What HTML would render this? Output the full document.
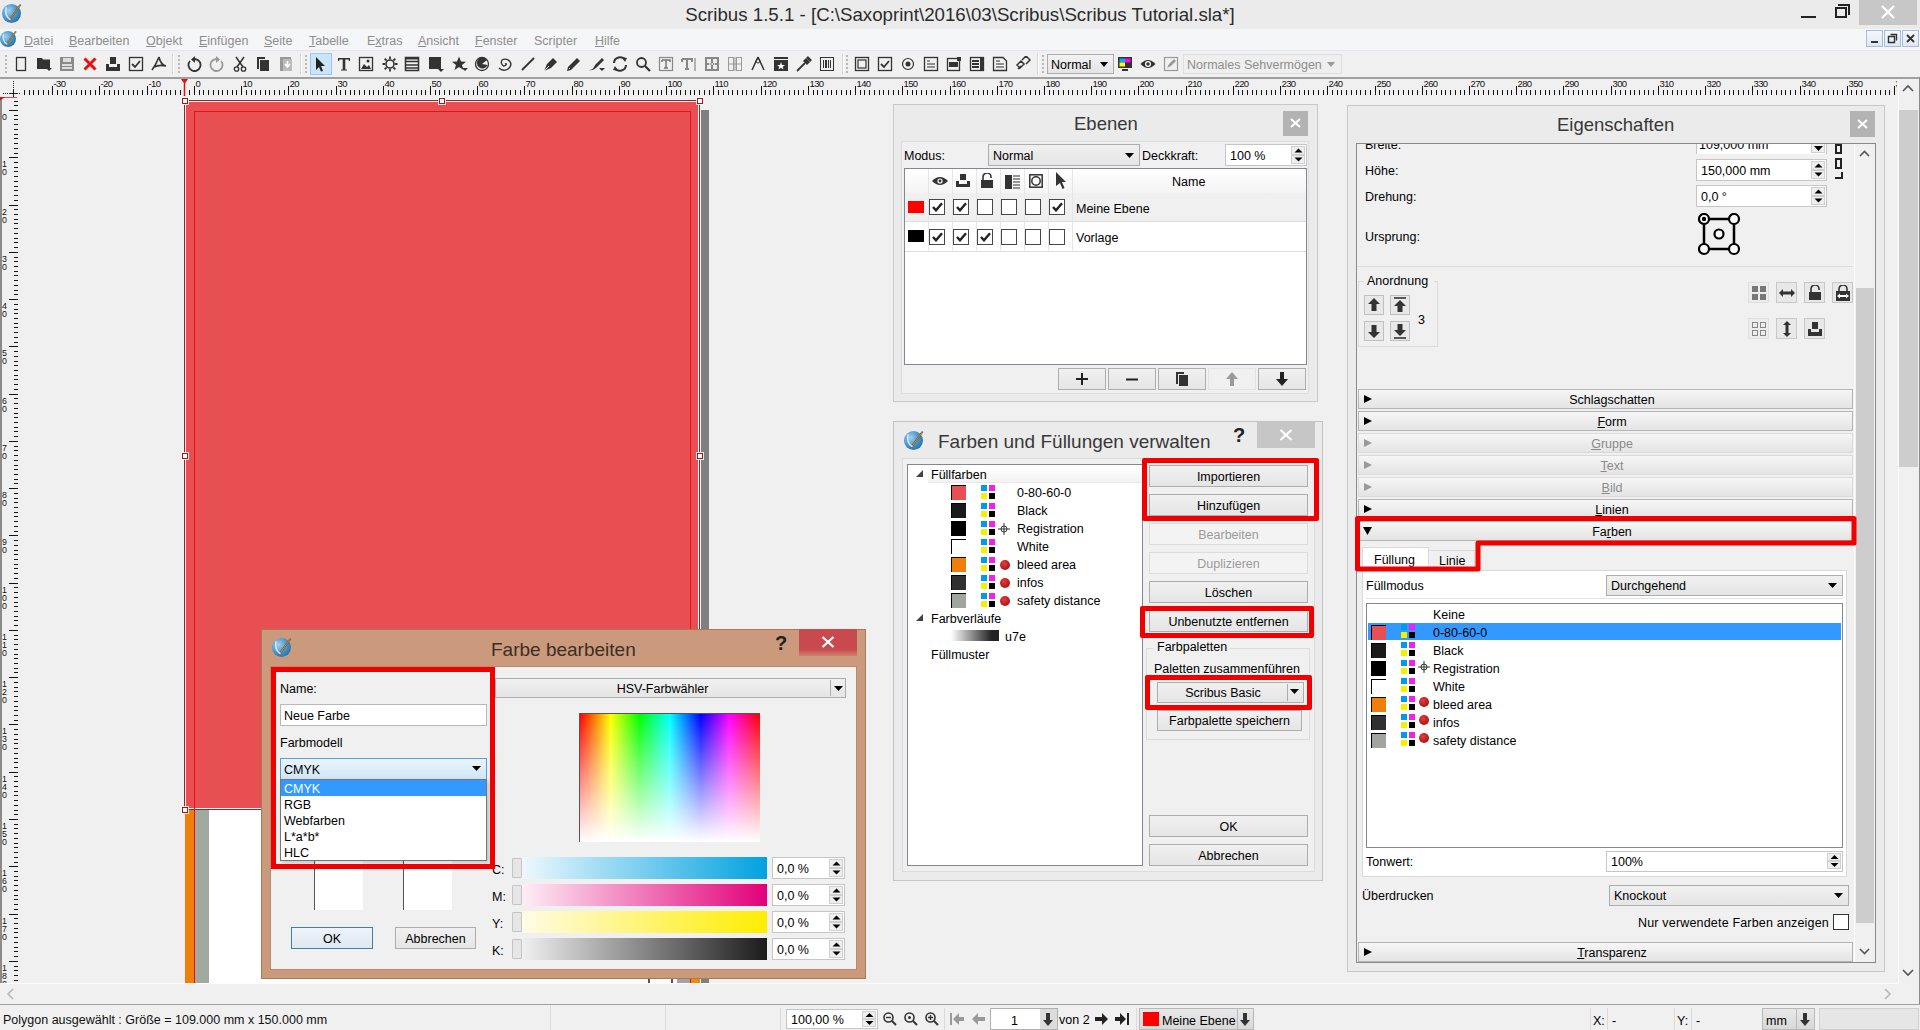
<!DOCTYPE html>
<html><head><meta charset="utf-8">
<style>
*{box-sizing:border-box;margin:0;padding:0}
html,body{width:1920px;height:1030px;overflow:hidden;background:#f0f0f0;font-family:"Liberation Sans",sans-serif;font-size:12.5px;color:#000}
.a{position:absolute}
.t{position:absolute;white-space:nowrap;line-height:1;padding-top:1px}
.btn{position:absolute;background:linear-gradient(#f2f2f2,#e6e6e6);border:1px solid #acacac}
.ctr{text-align:center}
u{text-decoration:underline}
</style></head><body>

<!-- TITLE BAR -->
<div class="a" style="left:0;top:0;width:1920px;height:29px;background:#ebebeb"></div>
<div class="t" style="left:0;top:5px;width:1920px;text-align:center;font-size:18.7px;color:#2b2b2b;padding-left:0">Scribus 1.5.1 - [C:\Saxoprint\2016\03\Scribus\Scribus Tutorial.sla*]</div>
<div class="a" style="left:1801px;top:16px;width:15px;height:2px;background:#222"></div>
<div class="a" style="left:1835px;top:7px;width:12px;height:11px;border:2px solid #222;border-top-width:2px"></div>
<div class="a" style="left:1838px;top:4px;width:12px;height:11px;border-top:2px solid #222;border-right:2px solid #222"></div>
<div class="a" style="left:1859px;top:0;width:58px;height:25px;background:#c7c7c7"></div>
<svg class="a" style="left:1880px;top:5px" width="16" height="14"><path d="M2 1 L14 13 M14 1 L2 13" stroke="#fff" stroke-width="2.2"/></svg>

<!-- MENU BAR -->
<div class="a" style="left:0;top:29px;width:1920px;height:22px;background:#f5f6f7;border-bottom:1px solid #e3e6ea"></div>
<div id="menu"></div>

<!-- TOOLBAR -->
<div class="a" style="left:0;top:51px;width:1920px;height:26px;background:#f0f0f0"></div>

<!-- RULERS -->
<div class="a" style="left:0;top:77px;width:1920px;height:2px;background:#a0a0a0"></div>

<!-- CANVAS -->
<div class="a" style="left:0;top:79px;width:1898px;height:906px;background:#f0f0f0"></div>

<!-- PAGE 1 -->
<div class="a" style="left:184px;top:100px;width:516px;height:710px;border:1px solid #a51d22;background:#fff"></div>
<div class="a" style="left:186px;top:102px;width:512px;height:706px;background:#e84f52"></div>
<div class="a" style="left:194px;top:111px;width:497px;height:700px;border:1px solid #ee1010;border-bottom:none"></div>
<div class="a" style="left:701px;top:110px;width:8px;height:873px;background:#808080"></div>


<!-- PAGE 2 strip -->
<div class="a" style="left:185px;top:810px;width:9px;height:173px;background:#ef7f0a"></div>
<div class="a" style="left:194px;top:810px;width:1px;height:173px;background:#e01010"></div>
<div class="a" style="left:195px;top:810px;width:14px;height:173px;background:#a2aaa0"></div>
<div class="a" style="left:209px;top:810px;width:492px;height:173px;background:#fff"></div>
<div class="a" style="left:648px;top:978px;width:2px;height:5px;background:#555"></div>
<div class="a" style="left:671px;top:978px;width:2px;height:5px;background:#555"></div>
<div class="a" style="left:677px;top:978px;width:13px;height:5px;background:#a2a4a0"></div>
<div class="a" style="left:690px;top:978px;width:1px;height:5px;background:#e01010"></div>
<div class="a" style="left:691px;top:978px;width:9px;height:5px;background:#ef8a0a"></div>
<div class="a" style="left:182px;top:98px;width:6px;height:6px;background:#fff;border:1px solid #a01818;box-shadow:0 0 0 1px rgba(255,255,255,0.8)"></div>
<div class="a" style="left:439px;top:98px;width:6px;height:6px;background:#fff;border:1px solid #a01818;box-shadow:0 0 0 1px rgba(255,255,255,0.8)"></div>
<div class="a" style="left:697px;top:98px;width:6px;height:6px;background:#fff;border:1px solid #a01818;box-shadow:0 0 0 1px rgba(255,255,255,0.8)"></div>
<div class="a" style="left:182px;top:453px;width:6px;height:6px;background:#fff;border:1px solid #a01818;box-shadow:0 0 0 1px rgba(255,255,255,0.8)"></div>
<div class="a" style="left:697px;top:453px;width:6px;height:6px;background:#fff;border:1px solid #a01818;box-shadow:0 0 0 1px rgba(255,255,255,0.8)"></div>
<div class="a" style="left:182px;top:807px;width:6px;height:6px;background:#fff;border:1px solid #a01818;box-shadow:0 0 0 1px rgba(255,255,255,0.8)"></div>
<div class="a" style="left:439px;top:807px;width:6px;height:6px;background:#fff;border:1px solid #a01818;box-shadow:0 0 0 1px rgba(255,255,255,0.8)"></div>
<div class="a" style="left:697px;top:807px;width:6px;height:6px;background:#fff;border:1px solid #a01818;box-shadow:0 0 0 1px rgba(255,255,255,0.8)"></div>


<!-- RIGHT SCROLLBAR -->
<div class="a" style="left:1898px;top:79px;width:22px;height:906px;background:#f0f0f0"></div>

<!-- STATUS BAR -->
<div class="a" style="left:0;top:983px;width:1920px;height:21px;background:#f0f0f0"></div>
<div class="a" style="left:0;top:1004px;width:1920px;height:1px;background:#a0a0a0"></div>
<div class="a" style="left:0;top:1005px;width:1920px;height:25px;background:#f0f0f0"></div>
<div class="a" style="left:665px;top:1005px;width:1px;height:25px;background:#dadada"></div>
<div class="t" style="left:3px;top:1013px;font-size:12.5px;color:#111">Polygon ausgewählt : Größe = 109.000 mm x 150.000 mm</div>


<!-- CHROME -->
<div class="a" style="left:2px;top:4px;width:19px;height:19px;border-radius:50%;background:radial-gradient(circle at 35% 35%,#9fd0f0,#3a8ac4 55%,#1d5a8a)"></div>
<svg class="a" style="left:2px;top:3px" width="21" height="21" viewBox="0 0 20 20"><path d="M18 2 L8 16 L6.5 17 L7 15.5 L17 1.5 Z" fill="#e8c070" stroke="#7a5020" stroke-width="0.8"/><path d="M4 4 Q2 12 8 16" fill="none" stroke="#e8f4ff" stroke-width="1.5" opacity="0.8"/></svg>
<div class="a" style="left:0px;top:31px;width:16px;height:16px;border-radius:50%;background:radial-gradient(circle at 35% 35%,#9fd0f0,#3a8ac4 55%,#1d5a8a)"></div>
<svg class="a" style="left:0px;top:30px" width="18" height="18" viewBox="0 0 20 20"><path d="M18 2 L8 16 L6.5 17 L7 15.5 L17 1.5 Z" fill="#e8c070" stroke="#7a5020" stroke-width="0.8"/><path d="M4 4 Q2 12 8 16" fill="none" stroke="#e8f4ff" stroke-width="1.5" opacity="0.8"/></svg>
<div class="t" style="left:24px;top:34px;color:#8d8d8d;font-size:12.5px"><u>D</u>atei</div>
<div class="t" style="left:69px;top:34px;color:#8d8d8d;font-size:12.5px"><u>B</u>earbeiten</div>
<div class="t" style="left:146px;top:34px;color:#8d8d8d;font-size:12.5px"><u>O</u>bjekt</div>
<div class="t" style="left:199px;top:34px;color:#8d8d8d;font-size:12.5px"><u>E</u>infügen</div>
<div class="t" style="left:264px;top:34px;color:#8d8d8d;font-size:12.5px"><u>S</u>eite</div>
<div class="t" style="left:309px;top:34px;color:#8d8d8d;font-size:12.5px"><u>T</u>abelle</div>
<div class="t" style="left:367px;top:34px;color:#8d8d8d;font-size:12.5px">E<u>x</u>tras</div>
<div class="t" style="left:418px;top:34px;color:#8d8d8d;font-size:12.5px"><u>A</u>nsicht</div>
<div class="t" style="left:475px;top:34px;color:#8d8d8d;font-size:12.5px"><u>F</u>enster</div>
<div class="t" style="left:534px;top:34px;color:#8d8d8d;font-size:12.5px">Scripter</div>
<div class="t" style="left:595px;top:34px;color:#8d8d8d;font-size:12.5px"><u>H</u>ilfe</div>
<div class="a" style="left:1866px;top:30px;width:17px;height:17px;border:1px solid #a8bcd4;background:linear-gradient(#f4f8fc,#dfe8f2)"></div>
<div class="a" style="left:1884px;top:30px;width:17px;height:17px;border:1px solid #a8bcd4;background:linear-gradient(#f4f8fc,#dfe8f2)"></div>
<div class="a" style="left:1902px;top:30px;width:17px;height:17px;border:1px solid #a8bcd4;background:linear-gradient(#f4f8fc,#dfe8f2)"></div>
<div class="a" style="left:1871px;top:41px;width:7px;height:2px;background:#333"></div>
<svg class="a" style="left:1887px;top:33px" width="11" height="11"><path d="M3.5 1.5 H9.5 V7.5 M1.5 3.5 H7.5 V9.5 H1.5 Z" fill="none" stroke="#333" stroke-width="1.4"/></svg>
<svg class="a" style="left:1905px;top:33px" width="11" height="11"><path d="M2 2 L9 9 M9 2 L2 9" stroke="#333" stroke-width="1.8"/></svg>
<div class="a" style="left:172px;top:53px;width:1px;height:22px;background:#d5d5d5"></div><div class="a" style="left:173px;top:53px;width:1px;height:22px;background:#fff"></div>
<div class="a" style="left:300px;top:53px;width:1px;height:22px;background:#d5d5d5"></div><div class="a" style="left:301px;top:53px;width:1px;height:22px;background:#fff"></div>
<div class="a" style="left:842px;top:53px;width:1px;height:22px;background:#d5d5d5"></div><div class="a" style="left:843px;top:53px;width:1px;height:22px;background:#fff"></div>
<div class="a" style="left:1037px;top:53px;width:1px;height:22px;background:#d5d5d5"></div><div class="a" style="left:1038px;top:53px;width:1px;height:22px;background:#fff"></div>
<div class="a" style="left:5px;top:55px;width:2px;height:19px;background:repeating-linear-gradient(#b8b8b8 0 2px,transparent 2px 4px)"></div>
<div class="a" style="left:178px;top:55px;width:2px;height:19px;background:repeating-linear-gradient(#b8b8b8 0 2px,transparent 2px 4px)"></div>
<div class="a" style="left:305px;top:55px;width:2px;height:19px;background:repeating-linear-gradient(#b8b8b8 0 2px,transparent 2px 4px)"></div>
<div class="a" style="left:846px;top:55px;width:2px;height:19px;background:repeating-linear-gradient(#b8b8b8 0 2px,transparent 2px 4px)"></div>
<div class="a" style="left:1042px;top:55px;width:2px;height:19px;background:repeating-linear-gradient(#b8b8b8 0 2px,transparent 2px 4px)"></div>
<div class="a" style="left:310px;top:53px;width:22px;height:22px;background:#cce4f7;border:1px solid #99c9ef"></div>
<svg class="a" style="left:13px;top:56px" width="16" height="16"><rect x="3.5" y="1.5" width="9" height="13" fill="none" stroke="#333" stroke-width="1.3"/></svg>
<svg class="a" style="left:36px;top:56px" width="16" height="16"><path d="M1 2 H6 L7 3.5 H14 V13 H1 Z" fill="#333"/><path d="M10 12 H16 L13 15 Z" fill="#333"/></svg>
<svg class="a" style="left:59px;top:56px" width="16" height="16"><rect x="1" y="1" width="14" height="14" fill="#8a8a8a"/><rect x="4" y="2" width="8" height="4" fill="#ddd"/><rect x="3" y="8" width="10" height="2" fill="#ddd"/><rect x="3" y="11" width="10" height="2" fill="#ddd"/></svg>
<svg class="a" style="left:82px;top:56px" width="16" height="16"><path d="M2.5 2.5 L13.5 13.5 M13.5 2.5 L2.5 13.5" stroke="#e81010" stroke-width="3"/></svg>
<svg class="a" style="left:105px;top:56px" width="16" height="16"><path d="M5 1 H11 V8 H5 Z M1 8 H4 V11 H12 V8 H15 V15 H1 Z" fill="#333"/></svg>
<svg class="a" style="left:128px;top:56px" width="16" height="16"><rect x="1.5" y="1.5" width="13" height="13" fill="none" stroke="#333" stroke-width="1.3"/><path d="M4 8 L7 11 L12 5" fill="none" stroke="#333" stroke-width="1.8"/></svg>
<svg class="a" style="left:151px;top:56px" width="16" height="16"><path d="M8 1 C6 6 4 10 1 14 M8 1 C9 6 11 9 15 10 M3 11 C7 9 11 9 15 10" fill="none" stroke="#333" stroke-width="1.6"/></svg>
<svg class="a" style="left:186px;top:56px" width="16" height="16"><path d="M4 5 A6 6 0 1 0 9 3" fill="none" stroke="#333" stroke-width="1.8"/><path d="M9 0 L5 3.5 L9 7 Z" fill="#333"/></svg>
<svg class="a" style="left:209px;top:56px" width="16" height="16"><path d="M12 5 A6 6 0 1 1 7 3" fill="none" stroke="#999" stroke-width="1.8"/><path d="M7 0 L11 3.5 L7 7 Z" fill="#999"/></svg>
<svg class="a" style="left:232px;top:56px" width="16" height="16"><path d="M4 1 L11 11 M12 1 L5 11" stroke="#333" stroke-width="1.5"/><circle cx="4.5" cy="13" r="2.2" fill="none" stroke="#333" stroke-width="1.3"/><circle cx="11.5" cy="13" r="2.2" fill="none" stroke="#333" stroke-width="1.3"/></svg>
<svg class="a" style="left:255px;top:56px" width="16" height="16"><path d="M2 1 H10 V3 H4 V13 H2 Z" fill="#333"/><rect x="5" y="4" width="9" height="11" fill="#333"/></svg>
<svg class="a" style="left:278px;top:56px" width="16" height="16"><rect x="2" y="1" width="11" height="14" fill="#999"/><rect x="5" y="3" width="9" height="12" fill="#bbb"/><path d="M9.5 5 V10 M7 8 L9.5 11 L12 8" stroke="#fff" stroke-width="1.6" fill="none"/></svg>
<svg class="a" style="left:312px;top:56px" width="16" height="16"><path d="M4 1 L13 10 L9 10 L11 15 L9 15.5 L7 11 L4 14 Z" fill="#222"/></svg>
<svg class="a" style="left:336px;top:56px" width="16" height="16"><path d="M2 2 H14 V5 H13 L12.5 3.5 H9.3 V13.5 H11 V14.5 H5 V13.5 H6.7 V3.5 H3.5 L3 5 H2 Z" fill="#333"/></svg>
<svg class="a" style="left:358px;top:56px" width="16" height="16"><rect x="1.5" y="1.5" width="13" height="13" fill="none" stroke="#333" stroke-width="1.3"/><path d="M3 13 L6 8 L9 11 L11 9 L13 13 Z" fill="#333"/><circle cx="10" cy="5" r="1.5" fill="#333"/></svg>
<svg class="a" style="left:382px;top:56px" width="16" height="16"><circle cx="8" cy="8" r="4" fill="none" stroke="#333" stroke-width="1.6"/><path d="M8 0.5 V3 M8 13 V15.5 M0.5 8 H3 M13 8 H15.5 M2.7 2.7 L4.5 4.5 M11.5 11.5 L13.3 13.3 M13.3 2.7 L11.5 4.5 M4.5 11.5 L2.7 13.3" stroke="#333" stroke-width="1.8"/></svg>
<svg class="a" style="left:404px;top:56px" width="16" height="16"><rect x="1.5" y="1.5" width="13" height="13" fill="none" stroke="#333" stroke-width="1.5"/><path d="M1.5 5.5 H14.5 M1.5 9 H14.5 M1.5 12 H14.5" stroke="#333" stroke-width="1.3"/><rect x="1.5" y="1.5" width="13" height="2" fill="#333"/></svg>
<svg class="a" style="left:428px;top:56px" width="16" height="16"><rect x="1" y="1" width="12" height="12" fill="#333"/><rect x="2.5" y="2.5" width="9" height="9" fill="#333"/><path d="M10 13 H16 L13 16 Z" fill="#333"/></svg>
<svg class="a" style="left:452px;top:56px" width="16" height="16"><path d="M7 0.5 L9 5.5 L14 5.7 L10 9 L11.5 14 L7 11 L2.5 14 L4 9 L0 5.7 L5 5.5 Z" fill="#333"/><path d="M10 12 H16 L13 15 Z" fill="#333"/></svg>
<svg class="a" style="left:474px;top:56px" width="16" height="16"><circle cx="8" cy="8" r="6.5" fill="none" stroke="#333" stroke-width="1.3"/><path d="M8 8 L13 4 A5.5 5.5 0 1 0 13.5 9 Z" fill="#333"/></svg>
<svg class="a" style="left:497px;top:56px" width="16" height="16"><path d="M8 8 A1.5 1.5 0 0 1 9.5 8 A3 3 0 0 1 6.5 10 A4.5 4.5 0 0 1 5 4 A6 6 0 0 1 14 8 A7 7 0 0 1 2 12" fill="none" stroke="#333" stroke-width="1.4"/></svg>
<svg class="a" style="left:520px;top:56px" width="16" height="16"><path d="M2 14 L14 2" stroke="#333" stroke-width="1.8"/></svg>
<svg class="a" style="left:543px;top:56px" width="16" height="16"><path d="M1 15 L4 8 L10 2 L14 6 L8 12 Z" fill="#333"/><path d="M1 15 L6 10" stroke="#eee" stroke-width="1"/></svg>
<svg class="a" style="left:566px;top:56px" width="16" height="16"><path d="M1 15 L2 11 L11 2 L14 5 L5 14 Z" fill="#333"/><path d="M3 12 L4 13" stroke="#eee"/></svg>
<svg class="a" style="left:589px;top:56px" width="16" height="16"><path d="M0 14 C3 14 5 12 6 9 L13 2 L15 4 L8 11 C6 13 3 15 0 14 Z" fill="#333"/><path d="M10 12 H16 L13 15 Z" fill="#333"/></svg>
<svg class="a" style="left:612px;top:56px" width="16" height="16"><path d="M2 7 A6 6 0 0 1 13 4 M14 9 A6 6 0 0 1 3 12" fill="none" stroke="#333" stroke-width="2"/><path d="M10 1 L15 2 L13 6 Z M6 15 L1 14 L3 10 Z" fill="#333"/></svg>
<svg class="a" style="left:635px;top:56px" width="16" height="16"><circle cx="6.5" cy="6.5" r="4.5" fill="none" stroke="#333" stroke-width="1.8"/><path d="M10 10 L15 15" stroke="#333" stroke-width="2.2"/></svg>
<svg class="a" style="left:658px;top:56px" width="16" height="16"><rect x="1.5" y="1.5" width="13" height="13" fill="none" stroke="#888" stroke-width="1.2"/><path d="M4 4 H12 V6 M4 4 V6 M8 4 V12 M6 12 H10" fill="none" stroke="#777" stroke-width="1.5"/></svg>
<svg class="a" style="left:681px;top:56px" width="16" height="16"><path d="M1 3 H11 V6 M1 3 V6 M6 3 V13 M4 13 H8" fill="none" stroke="#888" stroke-width="2"/><path d="M14 2 V15" stroke="#888" stroke-width="1.2"/></svg>
<svg class="a" style="left:704px;top:56px" width="16" height="16"><rect x="1" y="1" width="14" height="14" fill="#888"/><rect x="3" y="3" width="4" height="4" fill="#eee"/><rect x="9" y="3" width="4" height="4" fill="#eee"/><rect x="3" y="9" width="4" height="4" fill="#eee"/><rect x="9" y="9" width="4" height="4" fill="#eee"/><path d="M5 8 H11" stroke="#eee" stroke-width="1.5" stroke-dasharray="1.5 1"/></svg>
<svg class="a" style="left:727px;top:56px" width="16" height="16"><rect x="1.5" y="1.5" width="5" height="13" fill="none" stroke="#999"/><rect x="9.5" y="1.5" width="5" height="13" fill="none" stroke="#999"/><path d="M1.5 8 H14.5 M8 1 V15" stroke="#999"/></svg>
<svg class="a" style="left:750px;top:56px" width="16" height="16"><path d="M8 1 L2 14 M8 1 L14 14" stroke="#333" stroke-width="1.5"/><circle cx="8" cy="5" r="2" fill="none" stroke="#333"/></svg>
<svg class="a" style="left:773px;top:56px" width="16" height="16"><rect x="1" y="1" width="14" height="2" fill="#333"/><rect x="1" y="4" width="14" height="11" fill="#333"/><path d="M8 6 L9 9 H12 L9.7 10.7 L10.5 13.5 L8 11.8 L5.5 13.5 L6.3 10.7 L4 9 H7 Z" fill="#fff"/></svg>
<svg class="a" style="left:796px;top:56px" width="16" height="16"><path d="M1 15 L9 7" stroke="#333" stroke-width="1.8"/><path d="M7 5 L11 9 L14 6 L10 2 Z" fill="#333"/><path d="M11 1 L15 5" stroke="#333" stroke-width="2.5"/></svg>
<svg class="a" style="left:819px;top:56px" width="16" height="16"><rect x="1.5" y="1.5" width="13" height="13" fill="none" stroke="#333" stroke-width="1"/><path d="M4.5 4 V12 M6.5 4 V12 M9.5 4 V12 M11.5 4 V12" stroke="#333" stroke-width="1" shape-rendering="crispEdges"/><path d="M7.5 4 V12" stroke="#333" stroke-width="1" shape-rendering="crispEdges"/></svg>
<svg class="a" style="left:854px;top:56px" width="16" height="16"><rect x="1.5" y="1.5" width="13" height="13" fill="none" stroke="#333" stroke-width="1.3"/><rect x="4" y="4" width="8" height="8" fill="none" stroke="#333" stroke-width="1.2"/></svg>
<svg class="a" style="left:877px;top:56px" width="16" height="16"><rect x="1.5" y="1.5" width="13" height="13" fill="none" stroke="#333" stroke-width="1.3"/><path d="M4 8 L7 11 L12 5" fill="none" stroke="#333" stroke-width="1.8"/></svg>
<svg class="a" style="left:900px;top:56px" width="16" height="16"><circle cx="8" cy="8" r="5.5" fill="none" stroke="#333" stroke-width="1.2"/><circle cx="8" cy="8" r="2.5" fill="#333"/></svg>
<svg class="a" style="left:923px;top:56px" width="16" height="16"><rect x="1.5" y="1.5" width="13" height="13" fill="none" stroke="#333" stroke-width="1.3"/><path d="M4 5 H7 M4 8 H12 M4 11 H12" stroke="#333" stroke-width="1.2"/></svg>
<svg class="a" style="left:946px;top:56px" width="16" height="16"><rect x="1.5" y="2.5" width="12" height="12" fill="none" stroke="#333" stroke-width="1.3"/><rect x="3" y="6" width="9" height="5" fill="#333"/><rect x="11" y="1" width="4" height="4" fill="#333"/></svg>
<svg class="a" style="left:969px;top:56px" width="16" height="16"><rect x="1.5" y="1.5" width="13" height="13" fill="none" stroke="#333" stroke-width="1.3"/><rect x="3" y="4" width="7" height="2" fill="#333"/><rect x="3" y="7" width="7" height="2" fill="#333"/><rect x="3" y="10" width="7" height="2" fill="#333"/><rect x="11" y="2" width="3" height="12" fill="#333"/></svg>
<svg class="a" style="left:992px;top:56px" width="16" height="16"><path d="M1.5 1.5 H11 L14.5 5 V14.5 H1.5 Z" fill="none" stroke="#333" stroke-width="1.3"/><path d="M4 8 H12 M4 11 H12 M4 5 H8" stroke="#333" stroke-width="1.2"/></svg>
<svg class="a" style="left:1015px;top:56px" width="16" height="16"><path d="M3 13 L6 10 M2 9 L6 5 L9 8 L5 12 Z M7 4 L11 0 L15 4 L11 8" fill="none" stroke="#333" stroke-width="1.5"/></svg>
<svg class="a" style="left:1117px;top:56px" width="16" height="16"><rect x="1" y="1" width="14" height="11" fill="#333"/><rect x="2.5" y="2.5" width="5.5" height="4" fill="#00aaff"/><rect x="8" y="2.5" width="5.5" height="4" fill="#ff00ff"/><rect x="2.5" y="6.5" width="5.5" height="4" fill="#ffff00"/><rect x="5" y="13" width="6" height="2" fill="#333"/></svg>
<svg class="a" style="left:1140px;top:56px" width="16" height="16"><path d="M0.5 8 Q8 0 15.5 8 Q8 16 0.5 8 Z" fill="#333"/><circle cx="8" cy="8" r="3" fill="#fff"/><circle cx="8" cy="8" r="1.8" fill="#333"/></svg>
<svg class="a" style="left:1163px;top:56px" width="16" height="16"><rect x="1.5" y="1.5" width="13" height="13" fill="none" stroke="#999" stroke-width="1.2"/><path d="M4 12 L6 8 L11 3 L13 5 L8 10 Z" fill="#999"/></svg>
<div class="a" style="left:1047px;top:54px;width:67px;height:20px;background:linear-gradient(#f2f2f2,#e4e4e4);border:1px solid #adadad"></div>
<div class="t" style="left:1051px;top:58px;font-size:12.5px">Normal</div>
<svg class="a" style="left:1100px;top:62px" width="8" height="5"><path d="M0 0 H8 L4 5 Z" fill="#000"/></svg>
<div class="a" style="left:1183px;top:54px;width:159px;height:20px;background:#efefef;border:1px solid #dedede"></div>
<div class="t" style="left:1187px;top:58px;color:#8d8d8d;font-size:12.5px">Normales Sehvermögen</div>
<svg class="a" style="left:1327px;top:62px" width="8" height="5"><path d="M0 0 H8 L4 5 Z" fill="#999"/></svg>
<svg class="a" style="left:0;top:79px" width="1897" height="18"><path d="M24.5 11 V16 M29.5 11 V16 M33.5 11 V16 M38.5 11 V16 M43.5 11 V16 M48.5 11 V16 M52.5 7 V16 M57.5 11 V16 M62.5 11 V16 M66.5 11 V16 M71.5 11 V16 M76.5 11 V16 M81.5 11 V16 M85.5 11 V16 M90.5 11 V16 M95.5 11 V16 M99.5 7 V16 M104.5 11 V16 M109.5 11 V16 M114.5 11 V16 M118.5 11 V16 M123.5 11 V16 M128.5 11 V16 M133.5 11 V16 M137.5 11 V16 M142.5 11 V16 M147.5 7 V16 M151.5 11 V16 M156.5 11 V16 M161.5 11 V16 M166.5 11 V16 M170.5 11 V16 M175.5 11 V16 M180.5 11 V16 M184.5 11 V16 M189.5 11 V16 M194.5 7 V16 M199.5 11 V16 M203.5 11 V16 M208.5 11 V16 M213.5 11 V16 M218.5 11 V16 M222.5 11 V16 M227.5 11 V16 M232.5 11 V16 M236.5 11 V16 M241.5 7 V16 M246.5 11 V16 M251.5 11 V16 M255.5 11 V16 M260.5 11 V16 M265.5 11 V16 M269.5 11 V16 M274.5 11 V16 M279.5 11 V16 M284.5 11 V16 M288.5 7 V16 M293.5 11 V16 M298.5 11 V16 M303.5 11 V16 M307.5 11 V16 M312.5 11 V16 M317.5 11 V16 M321.5 11 V16 M326.5 11 V16 M331.5 11 V16 M336.5 7 V16 M340.5 11 V16 M345.5 11 V16 M350.5 11 V16 M354.5 11 V16 M359.5 11 V16 M364.5 11 V16 M369.5 11 V16 M373.5 11 V16 M378.5 11 V16 M383.5 7 V16 M388.5 11 V16 M392.5 11 V16 M397.5 11 V16 M402.5 11 V16 M406.5 11 V16 M411.5 11 V16 M416.5 11 V16 M421.5 11 V16 M425.5 11 V16 M430.5 7 V16 M435.5 11 V16 M439.5 11 V16 M444.5 11 V16 M449.5 11 V16 M454.5 11 V16 M458.5 11 V16 M463.5 11 V16 M468.5 11 V16 M473.5 11 V16 M477.5 7 V16 M482.5 11 V16 M487.5 11 V16 M491.5 11 V16 M496.5 11 V16 M501.5 11 V16 M506.5 11 V16 M510.5 11 V16 M515.5 11 V16 M520.5 11 V16 M524.5 7 V16 M529.5 11 V16 M534.5 11 V16 M539.5 11 V16 M543.5 11 V16 M548.5 11 V16 M553.5 11 V16 M558.5 11 V16 M562.5 11 V16 M567.5 11 V16 M572.5 7 V16 M576.5 11 V16 M581.5 11 V16 M586.5 11 V16 M591.5 11 V16 M595.5 11 V16 M600.5 11 V16 M605.5 11 V16 M609.5 11 V16 M614.5 11 V16 M619.5 7 V16 M624.5 11 V16 M628.5 11 V16 M633.5 11 V16 M638.5 11 V16 M643.5 11 V16 M647.5 11 V16 M652.5 11 V16 M657.5 11 V16 M661.5 11 V16 M666.5 7 V16 M671.5 11 V16 M676.5 11 V16 M680.5 11 V16 M685.5 11 V16 M690.5 11 V16 M694.5 11 V16 M699.5 11 V16 M704.5 11 V16 M709.5 11 V16 M713.5 7 V16 M718.5 11 V16 M723.5 11 V16 M728.5 11 V16 M732.5 11 V16 M737.5 11 V16 M742.5 11 V16 M746.5 11 V16 M751.5 11 V16 M756.5 11 V16 M761.5 7 V16 M765.5 11 V16 M770.5 11 V16 M775.5 11 V16 M779.5 11 V16 M784.5 11 V16 M789.5 11 V16 M794.5 11 V16 M798.5 11 V16 M803.5 11 V16 M808.5 7 V16 M813.5 11 V16 M817.5 11 V16 M822.5 11 V16 M827.5 11 V16 M831.5 11 V16 M836.5 11 V16 M841.5 11 V16 M846.5 11 V16 M850.5 11 V16 M855.5 7 V16 M860.5 11 V16 M864.5 11 V16 M869.5 11 V16 M874.5 11 V16 M879.5 11 V16 M883.5 11 V16 M888.5 11 V16 M893.5 11 V16 M898.5 11 V16 M902.5 7 V16 M907.5 11 V16 M912.5 11 V16 M916.5 11 V16 M921.5 11 V16 M926.5 11 V16 M931.5 11 V16 M935.5 11 V16 M940.5 11 V16 M945.5 11 V16 M950.5 7 V16 M954.5 11 V16 M959.5 11 V16 M964.5 11 V16 M968.5 11 V16 M973.5 11 V16 M978.5 11 V16 M983.5 11 V16 M987.5 11 V16 M992.5 11 V16 M997.5 7 V16 M1001.5 11 V16 M1006.5 11 V16 M1011.5 11 V16 M1016.5 11 V16 M1020.5 11 V16 M1025.5 11 V16 M1030.5 11 V16 M1035.5 11 V16 M1039.5 11 V16 M1044.5 7 V16 M1049.5 11 V16 M1053.5 11 V16 M1058.5 11 V16 M1063.5 11 V16 M1068.5 11 V16 M1072.5 11 V16 M1077.5 11 V16 M1082.5 11 V16 M1086.5 11 V16 M1091.5 7 V16 M1096.5 11 V16 M1101.5 11 V16 M1105.5 11 V16 M1110.5 11 V16 M1115.5 11 V16 M1120.5 11 V16 M1124.5 11 V16 M1129.5 11 V16 M1134.5 11 V16 M1138.5 7 V16 M1143.5 11 V16 M1148.5 11 V16 M1153.5 11 V16 M1157.5 11 V16 M1162.5 11 V16 M1167.5 11 V16 M1171.5 11 V16 M1176.5 11 V16 M1181.5 11 V16 M1186.5 7 V16 M1190.5 11 V16 M1195.5 11 V16 M1200.5 11 V16 M1205.5 11 V16 M1209.5 11 V16 M1214.5 11 V16 M1219.5 11 V16 M1223.5 11 V16 M1228.5 11 V16 M1233.5 7 V16 M1238.5 11 V16 M1242.5 11 V16 M1247.5 11 V16 M1252.5 11 V16 M1256.5 11 V16 M1261.5 11 V16 M1266.5 11 V16 M1271.5 11 V16 M1275.5 11 V16 M1280.5 7 V16 M1285.5 11 V16 M1290.5 11 V16 M1294.5 11 V16 M1299.5 11 V16 M1304.5 11 V16 M1308.5 11 V16 M1313.5 11 V16 M1318.5 11 V16 M1323.5 11 V16 M1327.5 7 V16 M1332.5 11 V16 M1337.5 11 V16 M1341.5 11 V16 M1346.5 11 V16 M1351.5 11 V16 M1356.5 11 V16 M1360.5 11 V16 M1365.5 11 V16 M1370.5 11 V16 M1375.5 7 V16 M1379.5 11 V16 M1384.5 11 V16 M1389.5 11 V16 M1393.5 11 V16 M1398.5 11 V16 M1403.5 11 V16 M1408.5 11 V16 M1412.5 11 V16 M1417.5 11 V16 M1422.5 7 V16 M1426.5 11 V16 M1431.5 11 V16 M1436.5 11 V16 M1441.5 11 V16 M1445.5 11 V16 M1450.5 11 V16 M1455.5 11 V16 M1460.5 11 V16 M1464.5 11 V16 M1469.5 7 V16 M1474.5 11 V16 M1478.5 11 V16 M1483.5 11 V16 M1488.5 11 V16 M1493.5 11 V16 M1497.5 11 V16 M1502.5 11 V16 M1507.5 11 V16 M1511.5 11 V16 M1516.5 7 V16 M1521.5 11 V16 M1526.5 11 V16 M1530.5 11 V16 M1535.5 11 V16 M1540.5 11 V16 M1545.5 11 V16 M1549.5 11 V16 M1554.5 11 V16 M1559.5 11 V16 M1563.5 7 V16 M1568.5 11 V16 M1573.5 11 V16 M1578.5 11 V16 M1582.5 11 V16 M1587.5 11 V16 M1592.5 11 V16 M1596.5 11 V16 M1601.5 11 V16 M1606.5 11 V16 M1611.5 7 V16 M1615.5 11 V16 M1620.5 11 V16 M1625.5 11 V16 M1630.5 11 V16 M1634.5 11 V16 M1639.5 11 V16 M1644.5 11 V16 M1648.5 11 V16 M1653.5 11 V16 M1658.5 7 V16 M1663.5 11 V16 M1667.5 11 V16 M1672.5 11 V16 M1677.5 11 V16 M1681.5 11 V16 M1686.5 11 V16 M1691.5 11 V16 M1696.5 11 V16 M1700.5 11 V16 M1705.5 7 V16 M1710.5 11 V16 M1715.5 11 V16 M1719.5 11 V16 M1724.5 11 V16 M1729.5 11 V16 M1733.5 11 V16 M1738.5 11 V16 M1743.5 11 V16 M1748.5 11 V16 M1752.5 7 V16 M1757.5 11 V16 M1762.5 11 V16 M1766.5 11 V16 M1771.5 11 V16 M1776.5 11 V16 M1781.5 11 V16 M1785.5 11 V16 M1790.5 11 V16 M1795.5 11 V16 M1800.5 7 V16 M1804.5 11 V16 M1809.5 11 V16 M1814.5 11 V16 M1818.5 11 V16 M1823.5 11 V16 M1828.5 11 V16 M1833.5 11 V16 M1837.5 11 V16 M1842.5 11 V16 M1847.5 7 V16 M1851.5 11 V16 M1856.5 11 V16 M1861.5 11 V16 M1866.5 11 V16 M1870.5 11 V16 M1875.5 11 V16 M1880.5 11 V16 M1885.5 11 V16 M1889.5 11 V16 M1894.5 7 V16" stroke="#111" stroke-width="1" shape-rendering="crispEdges"/><text x="53.5" y="8" font-size="9.5" font-family="Liberation Sans" fill="#111" letter-spacing="-0.6">-30</text><text x="100.5" y="8" font-size="9.5" font-family="Liberation Sans" fill="#111" letter-spacing="-0.6">-20</text><text x="148.5" y="8" font-size="9.5" font-family="Liberation Sans" fill="#111" letter-spacing="-0.6">-10</text><text x="195.5" y="8" font-size="9.5" font-family="Liberation Sans" fill="#111" letter-spacing="-0.6">0</text><text x="242.5" y="8" font-size="9.5" font-family="Liberation Sans" fill="#111" letter-spacing="-0.6">10</text><text x="289.5" y="8" font-size="9.5" font-family="Liberation Sans" fill="#111" letter-spacing="-0.6">20</text><text x="337.5" y="8" font-size="9.5" font-family="Liberation Sans" fill="#111" letter-spacing="-0.6">30</text><text x="384.5" y="8" font-size="9.5" font-family="Liberation Sans" fill="#111" letter-spacing="-0.6">40</text><text x="431.5" y="8" font-size="9.5" font-family="Liberation Sans" fill="#111" letter-spacing="-0.6">50</text><text x="478.5" y="8" font-size="9.5" font-family="Liberation Sans" fill="#111" letter-spacing="-0.6">60</text><text x="525.5" y="8" font-size="9.5" font-family="Liberation Sans" fill="#111" letter-spacing="-0.6">70</text><text x="573.5" y="8" font-size="9.5" font-family="Liberation Sans" fill="#111" letter-spacing="-0.6">80</text><text x="620.5" y="8" font-size="9.5" font-family="Liberation Sans" fill="#111" letter-spacing="-0.6">90</text><text x="667.5" y="8" font-size="9.5" font-family="Liberation Sans" fill="#111" letter-spacing="-0.6">100</text><text x="714.5" y="8" font-size="9.5" font-family="Liberation Sans" fill="#111" letter-spacing="-0.6">110</text><text x="762.5" y="8" font-size="9.5" font-family="Liberation Sans" fill="#111" letter-spacing="-0.6">120</text><text x="809.5" y="8" font-size="9.5" font-family="Liberation Sans" fill="#111" letter-spacing="-0.6">130</text><text x="856.5" y="8" font-size="9.5" font-family="Liberation Sans" fill="#111" letter-spacing="-0.6">140</text><text x="903.5" y="8" font-size="9.5" font-family="Liberation Sans" fill="#111" letter-spacing="-0.6">150</text><text x="951.5" y="8" font-size="9.5" font-family="Liberation Sans" fill="#111" letter-spacing="-0.6">160</text><text x="998.5" y="8" font-size="9.5" font-family="Liberation Sans" fill="#111" letter-spacing="-0.6">170</text><text x="1045.5" y="8" font-size="9.5" font-family="Liberation Sans" fill="#111" letter-spacing="-0.6">180</text><text x="1092.5" y="8" font-size="9.5" font-family="Liberation Sans" fill="#111" letter-spacing="-0.6">190</text><text x="1139.5" y="8" font-size="9.5" font-family="Liberation Sans" fill="#111" letter-spacing="-0.6">200</text><text x="1187.5" y="8" font-size="9.5" font-family="Liberation Sans" fill="#111" letter-spacing="-0.6">210</text><text x="1234.5" y="8" font-size="9.5" font-family="Liberation Sans" fill="#111" letter-spacing="-0.6">220</text><text x="1281.5" y="8" font-size="9.5" font-family="Liberation Sans" fill="#111" letter-spacing="-0.6">230</text><text x="1328.5" y="8" font-size="9.5" font-family="Liberation Sans" fill="#111" letter-spacing="-0.6">240</text><text x="1376.5" y="8" font-size="9.5" font-family="Liberation Sans" fill="#111" letter-spacing="-0.6">250</text><text x="1423.5" y="8" font-size="9.5" font-family="Liberation Sans" fill="#111" letter-spacing="-0.6">260</text><text x="1470.5" y="8" font-size="9.5" font-family="Liberation Sans" fill="#111" letter-spacing="-0.6">270</text><text x="1517.5" y="8" font-size="9.5" font-family="Liberation Sans" fill="#111" letter-spacing="-0.6">280</text><text x="1564.5" y="8" font-size="9.5" font-family="Liberation Sans" fill="#111" letter-spacing="-0.6">290</text><text x="1612.5" y="8" font-size="9.5" font-family="Liberation Sans" fill="#111" letter-spacing="-0.6">300</text><text x="1659.5" y="8" font-size="9.5" font-family="Liberation Sans" fill="#111" letter-spacing="-0.6">310</text><text x="1706.5" y="8" font-size="9.5" font-family="Liberation Sans" fill="#111" letter-spacing="-0.6">320</text><text x="1753.5" y="8" font-size="9.5" font-family="Liberation Sans" fill="#111" letter-spacing="-0.6">330</text><text x="1801.5" y="8" font-size="9.5" font-family="Liberation Sans" fill="#111" letter-spacing="-0.6">340</text><text x="1848.5" y="8" font-size="9.5" font-family="Liberation Sans" fill="#111" letter-spacing="-0.6">350</text><text x="1895.5" y="8" font-size="9.5" font-family="Liberation Sans" fill="#111" letter-spacing="-0.6">360</text><path d="M3 14.5 H20 M13.5 2 V17" stroke="#222" stroke-dasharray="1 1" shape-rendering="crispEdges"/><path d="M9 14.5 H18 M13.5 10 V18" stroke="#222" shape-rendering="crispEdges"/><path d="M184.5 4 V17" stroke="#e01010" stroke-width="1.5"/><path d="M181 0 H188 L184.5 5 Z" fill="#e01010"/></svg>
<svg class="a" style="left:0;top:97px" width="22" height="886"><path d="M14 4.5 H18 M14 8.5 H18 M9 13.5 H18 M14 18.5 H18 M14 22.5 H18 M14 27.5 H18 M14 32.5 H18 M14 37.5 H18 M14 41.5 H18 M14 46.5 H18 M14 51.5 H18 M14 56.5 H18 M9 60.5 H18 M14 65.5 H18 M14 70.5 H18 M14 74.5 H18 M14 79.5 H18 M14 84.5 H18 M14 89.5 H18 M14 93.5 H18 M14 98.5 H18 M14 103.5 H18 M9 108.5 H18 M14 112.5 H18 M14 117.5 H18 M14 122.5 H18 M14 126.5 H18 M14 131.5 H18 M14 136.5 H18 M14 141.5 H18 M14 145.5 H18 M14 150.5 H18 M9 155.5 H18 M14 160.5 H18 M14 164.5 H18 M14 169.5 H18 M14 174.5 H18 M14 178.5 H18 M14 183.5 H18 M14 188.5 H18 M14 193.5 H18 M14 197.5 H18 M9 202.5 H18 M14 207.5 H18 M14 212.5 H18 M14 216.5 H18 M14 221.5 H18 M14 226.5 H18 M14 230.5 H18 M14 235.5 H18 M14 240.5 H18 M14 245.5 H18 M9 249.5 H18 M14 254.5 H18 M14 259.5 H18 M14 264.5 H18 M14 268.5 H18 M14 273.5 H18 M14 278.5 H18 M14 282.5 H18 M14 287.5 H18 M14 292.5 H18 M9 297.5 H18 M14 301.5 H18 M14 306.5 H18 M14 311.5 H18 M14 316.5 H18 M14 320.5 H18 M14 325.5 H18 M14 330.5 H18 M14 334.5 H18 M14 339.5 H18 M9 344.5 H18 M14 349.5 H18 M14 353.5 H18 M14 358.5 H18 M14 363.5 H18 M14 368.5 H18 M14 372.5 H18 M14 377.5 H18 M14 382.5 H18 M14 386.5 H18 M9 391.5 H18 M14 396.5 H18 M14 401.5 H18 M14 405.5 H18 M14 410.5 H18 M14 415.5 H18 M14 419.5 H18 M14 424.5 H18 M14 429.5 H18 M14 434.5 H18 M9 438.5 H18 M14 443.5 H18 M14 448.5 H18 M14 453.5 H18 M14 457.5 H18 M14 462.5 H18 M14 467.5 H18 M14 471.5 H18 M14 476.5 H18 M14 481.5 H18 M9 486.5 H18 M14 490.5 H18 M14 495.5 H18 M14 500.5 H18 M14 505.5 H18 M14 509.5 H18 M14 514.5 H18 M14 519.5 H18 M14 523.5 H18 M14 528.5 H18 M9 533.5 H18 M14 538.5 H18 M14 542.5 H18 M14 547.5 H18 M14 552.5 H18 M14 557.5 H18 M14 561.5 H18 M14 566.5 H18 M14 571.5 H18 M14 575.5 H18 M9 580.5 H18 M14 585.5 H18 M14 590.5 H18 M14 594.5 H18 M14 599.5 H18 M14 604.5 H18 M14 609.5 H18 M14 613.5 H18 M14 618.5 H18 M14 623.5 H18 M9 627.5 H18 M14 632.5 H18 M14 637.5 H18 M14 642.5 H18 M14 646.5 H18 M14 651.5 H18 M14 656.5 H18 M14 661.5 H18 M14 665.5 H18 M14 670.5 H18 M9 675.5 H18 M14 679.5 H18 M14 684.5 H18 M14 689.5 H18 M14 694.5 H18 M14 698.5 H18 M14 703.5 H18 M14 708.5 H18 M14 713.5 H18 M14 717.5 H18 M9 722.5 H18 M14 727.5 H18 M14 731.5 H18 M14 736.5 H18 M14 741.5 H18 M14 746.5 H18 M14 750.5 H18 M14 755.5 H18 M14 760.5 H18 M14 765.5 H18 M9 769.5 H18 M14 774.5 H18 M14 779.5 H18 M14 783.5 H18 M14 788.5 H18 M14 793.5 H18 M14 798.5 H18 M14 802.5 H18 M14 807.5 H18 M14 812.5 H18 M9 817.5 H18 M14 821.5 H18 M14 826.5 H18 M14 831.5 H18 M14 835.5 H18 M14 840.5 H18 M14 845.5 H18 M14 850.5 H18 M14 854.5 H18 M14 859.5 H18 M9 864.5 H18 M14 869.5 H18 M14 873.5 H18 M14 878.5 H18 M14 883.5 H18" stroke="#111" stroke-width="1" shape-rendering="crispEdges"/><text x="2" y="23.0" font-size="8.8" font-family="Liberation Sans" fill="#111">0</text><text x="2" y="70.0" font-size="8.8" font-family="Liberation Sans" fill="#111">1</text><text x="2" y="78.0" font-size="8.8" font-family="Liberation Sans" fill="#111">0</text><text x="2" y="118.0" font-size="8.8" font-family="Liberation Sans" fill="#111">2</text><text x="2" y="126.0" font-size="8.8" font-family="Liberation Sans" fill="#111">0</text><text x="2" y="165.0" font-size="8.8" font-family="Liberation Sans" fill="#111">3</text><text x="2" y="173.0" font-size="8.8" font-family="Liberation Sans" fill="#111">0</text><text x="2" y="212.0" font-size="8.8" font-family="Liberation Sans" fill="#111">4</text><text x="2" y="220.0" font-size="8.8" font-family="Liberation Sans" fill="#111">0</text><text x="2" y="259.0" font-size="8.8" font-family="Liberation Sans" fill="#111">5</text><text x="2" y="267.0" font-size="8.8" font-family="Liberation Sans" fill="#111">0</text><text x="2" y="307.0" font-size="8.8" font-family="Liberation Sans" fill="#111">6</text><text x="2" y="315.0" font-size="8.8" font-family="Liberation Sans" fill="#111">0</text><text x="2" y="354.0" font-size="8.8" font-family="Liberation Sans" fill="#111">7</text><text x="2" y="362.0" font-size="8.8" font-family="Liberation Sans" fill="#111">0</text><text x="2" y="401.0" font-size="8.8" font-family="Liberation Sans" fill="#111">8</text><text x="2" y="409.0" font-size="8.8" font-family="Liberation Sans" fill="#111">0</text><text x="2" y="448.0" font-size="8.8" font-family="Liberation Sans" fill="#111">9</text><text x="2" y="456.0" font-size="8.8" font-family="Liberation Sans" fill="#111">0</text><text x="2" y="496.0" font-size="8.8" font-family="Liberation Sans" fill="#111">1</text><text x="2" y="504.0" font-size="8.8" font-family="Liberation Sans" fill="#111">0</text><text x="2" y="512.0" font-size="8.8" font-family="Liberation Sans" fill="#111">0</text><text x="2" y="543.0" font-size="8.8" font-family="Liberation Sans" fill="#111">1</text><text x="2" y="551.0" font-size="8.8" font-family="Liberation Sans" fill="#111">1</text><text x="2" y="559.0" font-size="8.8" font-family="Liberation Sans" fill="#111">0</text><text x="2" y="590.0" font-size="8.8" font-family="Liberation Sans" fill="#111">1</text><text x="2" y="598.0" font-size="8.8" font-family="Liberation Sans" fill="#111">2</text><text x="2" y="606.0" font-size="8.8" font-family="Liberation Sans" fill="#111">0</text><text x="2" y="637.0" font-size="8.8" font-family="Liberation Sans" fill="#111">1</text><text x="2" y="645.0" font-size="8.8" font-family="Liberation Sans" fill="#111">3</text><text x="2" y="653.0" font-size="8.8" font-family="Liberation Sans" fill="#111">0</text><text x="2" y="685.0" font-size="8.8" font-family="Liberation Sans" fill="#111">1</text><text x="2" y="693.0" font-size="8.8" font-family="Liberation Sans" fill="#111">4</text><text x="2" y="701.0" font-size="8.8" font-family="Liberation Sans" fill="#111">0</text><text x="2" y="732.0" font-size="8.8" font-family="Liberation Sans" fill="#111">1</text><text x="2" y="740.0" font-size="8.8" font-family="Liberation Sans" fill="#111">5</text><text x="2" y="748.0" font-size="8.8" font-family="Liberation Sans" fill="#111">0</text><text x="2" y="779.0" font-size="8.8" font-family="Liberation Sans" fill="#111">1</text><text x="2" y="787.0" font-size="8.8" font-family="Liberation Sans" fill="#111">6</text><text x="2" y="795.0" font-size="8.8" font-family="Liberation Sans" fill="#111">0</text><text x="2" y="827.0" font-size="8.8" font-family="Liberation Sans" fill="#111">1</text><text x="2" y="835.0" font-size="8.8" font-family="Liberation Sans" fill="#111">7</text><text x="2" y="843.0" font-size="8.8" font-family="Liberation Sans" fill="#111">0</text><text x="2" y="874.0" font-size="8.8" font-family="Liberation Sans" fill="#111">1</text><text x="2" y="882.0" font-size="8.8" font-family="Liberation Sans" fill="#111">8</text><text x="2" y="890.0" font-size="8.8" font-family="Liberation Sans" fill="#111">0</text><path d="M1 0 V886" stroke="#8a8a8a" stroke-width="2"/><path d="M3 0 H17" stroke="#e01010" stroke-width="1.5"/><path d="M0 -3.5 V3.5 L5 0 Z" fill="#e01010"/></svg>
<div class="a" style="left:1898px;top:79px;width:1px;height:904px;background:#fdfdfd"></div>
<div class="a" style="left:1899px;top:110px;width:19px;height:357px;background:#cdcdcd"></div>
<svg class="a" style="left:1902px;top:84px" width="12" height="8"><path d="M1 7 L6 2 L11 7" fill="none" stroke="#555" stroke-width="1.6"/></svg>
<svg class="a" style="left:1902px;top:969px" width="12" height="8"><path d="M1 1 L6 6 L11 1" fill="none" stroke="#555" stroke-width="1.6"/></svg>
<div class="a" style="left:1919px;top:77px;width:1px;height:927px;background:#8a8a8a"></div>
<div class="a" style="left:1px;top:983px;width:1897px;height:1px;background:#fdfdfd"></div>
<svg class="a" style="left:6px;top:988px" width="8" height="12"><path d="M7 1 L2 6 L7 11" fill="none" stroke="#b5b5b5" stroke-width="1.5"/></svg>
<svg class="a" style="left:1884px;top:988px" width="8" height="12"><path d="M1 1 L6 6 L1 11" fill="none" stroke="#b5b5b5" stroke-width="1.5"/></svg>
<div class="a" style="left:780px;top:1008px;width:1px;height:22px;background:#dadada"></div>
<div class="a" style="left:550px;top:1005px;width:1px;height:25px;background:#dadada"></div>
<div class="a" style="left:786px;top:1009px;width:92px;height:20px;background:#fff;border:1px solid #c5c5c5"></div>
<div class="a" style="left:862px;top:1011px;width:14px;height:8px;background:#eee;border:1px solid #d0d0d0"></div><div class="a" style="left:862px;top:1019px;width:14px;height:8px;background:#eee;border:1px solid #d0d0d0"></div><svg class="a" style="left:865px;top:1011px" width="9" height="16"><path d="M0.5 6.0 L4.5 2.0 L8.5 6.0 Z M0.5 10.0 L4.5 14.0 L8.5 10.0 Z" fill="#000"/></svg>
<div class="t" style="left:791px;top:1013px;">100,00 %</div>
<svg class="a" style="left:882px;top:1011px" width="16" height="16"><circle cx="6.5" cy="6.5" r="4.5" fill="none" stroke="#333" stroke-width="1.6"/><path d="M10 10 L14 14" stroke="#333" stroke-width="2"/><path d="M4 6.5 H9" stroke="#333" stroke-width="1.4"/></svg>
<svg class="a" style="left:903px;top:1011px" width="16" height="16"><circle cx="6.5" cy="6.5" r="4.5" fill="none" stroke="#333" stroke-width="1.6"/><path d="M10 10 L14 14" stroke="#333" stroke-width="2"/><circle cx="6.5" cy="6.5" r="1.5" fill="#333"/></svg>
<svg class="a" style="left:924px;top:1011px" width="16" height="16"><circle cx="6.5" cy="6.5" r="4.5" fill="none" stroke="#333" stroke-width="1.6"/><path d="M10 10 L14 14" stroke="#333" stroke-width="2"/><path d="M4 6.5 H9 M6.5 4 V9" stroke="#333" stroke-width="1.4"/></svg>
<div class="a" style="left:944px;top:1008px;width:1px;height:22px;background:#dadada"></div>
<svg class="a" style="left:949px;top:1011px" width="16" height="16"><path d="M2 2 V14" stroke="#999" stroke-width="2"/><path d="M4 8 L10 2 V6 H15 V10 H10 V14 Z" fill="#999"/></svg>
<svg class="a" style="left:971px;top:1011px" width="16" height="16"><path d="M1 8 L7 2 V6 H14 V10 H7 V14 Z" fill="#999"/></svg>
<div class="a" style="left:990px;top:1008px;width:68px;height:22px;background:#fff;border:1px solid #b0b0b0"></div>
<div class="a" style="left:1040px;top:1009px;width:17px;height:20px;background:#dcdcdc"></div>
<svg class="a" style="left:1042px;top:1012px" width="12" height="14"><path d="M6 14 L11 8 H8 V1 H4 V8 H1 Z" fill="#333"/></svg>
<div class="t" style="left:1011px;top:1014px;">1</div>
<div class="t" style="left:1059px;top:1013px;">von 2</div>
<svg class="a" style="left:1093px;top:1011px" width="16" height="16"><path d="M15 8 L9 2 V6 H2 V10 H9 V14 Z" fill="#222"/></svg>
<svg class="a" style="left:1114px;top:1011px" width="16" height="16"><path d="M14 2 V14" stroke="#222" stroke-width="2"/><path d="M12 8 L6 2 V6 H1 V10 H6 V14 Z" fill="#222"/></svg>
<div class="a" style="left:1136px;top:1008px;width:1px;height:22px;background:#dadada"></div>
<div class="a" style="left:1139px;top:1008px;width:115px;height:22px;background:linear-gradient(#e8e8e8,#d8d8d8);border:1px solid #b8b8b8"></div>
<div class="a" style="left:1143px;top:1012px;width:16px;height:14px;background:#ff0000"></div>
<div class="t" style="left:1162px;top:1014px;">Meine Ebene</div>
<div class="a" style="left:1237px;top:1009px;width:1px;height:20px;background:#b8b8b8"></div>
<svg class="a" style="left:1239px;top:1012px" width="12" height="14"><path d="M6 14 L11 8 H8 V1 H4 V8 H1 Z" fill="#333"/></svg>
<div class="a" style="left:1590px;top:1008px;width:1px;height:22px;background:#dadada"></div>
<div class="t" style="left:1593px;top:1014px;">X:</div>
<div class="a" style="left:1607px;top:1008px;width:1px;height:22px;background:#dadada"></div>
<div class="t" style="left:1612px;top:1014px;">-</div>
<div class="a" style="left:1674px;top:1008px;width:1px;height:22px;background:#dadada"></div>
<div class="t" style="left:1677px;top:1014px;">Y:</div>
<div class="a" style="left:1691px;top:1008px;width:1px;height:22px;background:#dadada"></div>
<div class="t" style="left:1696px;top:1014px;">-</div>
<div class="a" style="left:1762px;top:1008px;width:53px;height:22px;background:linear-gradient(#e8e8e8,#d8d8d8);border:1px solid #b8b8b8"></div>
<div class="t" style="left:1766px;top:1014px;">mm</div>
<div class="a" style="left:1796px;top:1009px;width:1px;height:20px;background:#b8b8b8"></div>
<svg class="a" style="left:1799px;top:1012px" width="12" height="14"><path d="M6 14 L11 8 H8 V1 H4 V8 H1 Z" fill="#333"/></svg>
<div class="a" style="left:1819px;top:1008px;width:100px;height:22px;background:#e6e6e6;border:1px solid #d0d0d0"></div>
<!-- EBENEN -->
<div class="a" style="left:893px;top:104px;width:425px;height:298px;background:#ebebeb;border:1px solid #c8c8c8"></div>
<div class="a" style="left:901px;top:141px;width:408px;height:253px;background:#f0f0f0;border:1px solid #dddddd"></div>
<div class="t" style="left:1074px;top:114px;font-size:18.5px;color:#383838">Ebenen</div>
<div class="a" style="left:1283px;top:111px;width:25px;height:25px;background:#b3b3b3"></div>
<svg class="a" style="left:1290px;top:118px" width="11" height="10"><path d="M1 1 L10 9 M10 1 L1 9" stroke="#fff" stroke-width="2"/></svg>
<div class="t" style="left:904px;top:149px;">Modus:</div>
<div class="a" style="left:988px;top:144px;width:152px;height:22px;background:linear-gradient(#f0f0f0,#e5e5e5);border:1px solid #adadad;"></div>
<div class="t" style="left:993px;top:149px;color:#000">Normal</div>
<svg class="a" style="left:1125px;top:153px" width="9" height="5"><path d="M0 0 H9 L4.5 5 Z" fill="#000"/></svg>
<div class="t" style="left:1142px;top:149px;">Deckkraft:</div>
<div class="a" style="left:1225px;top:144px;width:82px;height:22px;background:#fff;border:1px solid #c5c5c5"></div>
<div class="a" style="left:1291px;top:146px;width:14px;height:9px;background:#eee;border:1px solid #d0d0d0"></div><div class="a" style="left:1291px;top:155px;width:14px;height:9px;background:#eee;border:1px solid #d0d0d0"></div><svg class="a" style="left:1294px;top:146px" width="9" height="18"><path d="M0.5 6.5 L4.5 2.5 L8.5 6.5 Z M0.5 11.5 L4.5 15.5 L8.5 11.5 Z" fill="#000"/></svg>
<div class="t" style="left:1230px;top:149px;">100 %</div>
<div class="a" style="left:904px;top:168px;width:403px;height:197px;background:#fff;border:1px solid #828790"></div>
<div class="a" style="left:905px;top:169px;width:401px;height:24px;background:linear-gradient(#fff,#f4f4f4)"></div>
<div class="a" style="left:905px;top:193px;width:401px;height:29px;background:#f0f0f0;border-bottom:1px solid #dcdcdc"></div>
<div class="a" style="left:905px;top:222px;width:401px;height:30px;background:#fff;border-bottom:1px solid #dcdcdc"></div>
<div class="a" style="left:928px;top:169px;width:1px;height:83px;background:#e6e6e6"></div>
<div class="a" style="left:952px;top:169px;width:1px;height:83px;background:#e6e6e6"></div>
<div class="a" style="left:976px;top:169px;width:1px;height:83px;background:#e6e6e6"></div>
<div class="a" style="left:1000px;top:169px;width:1px;height:83px;background:#e6e6e6"></div>
<div class="a" style="left:1024px;top:169px;width:1px;height:83px;background:#e6e6e6"></div>
<div class="a" style="left:1048px;top:169px;width:1px;height:83px;background:#e6e6e6"></div>
<div class="a" style="left:1072px;top:169px;width:1px;height:83px;background:#e6e6e6"></div>
<div class="t" style="left:1172px;top:175px;">Name</div>
<svg class="a" style="left:931px;top:175px" width="18" height="12"><path d="M1 6 Q9 -2 17 6 Q9 14 1 6 Z" fill="#333"/><circle cx="9" cy="6" r="2.6" fill="#fff"/><circle cx="9" cy="6" r="1.4" fill="#333"/></svg>
<svg class="a" style="left:956px;top:174px" width="14" height="14"><path d="M4 0 H10 V6 H4 Z M0 7 H3 V10 H11 V7 H14 V13 H0 Z" fill="#333"/></svg>
<svg class="a" style="left:980px;top:173px" width="14" height="16"><path d="M3 7 V4 A4 4 0 0 1 11 4 V5" fill="none" stroke="#333" stroke-width="1.6"/><rect x="1" y="7" width="12" height="8" fill="#333"/></svg>
<svg class="a" style="left:1005px;top:175px" width="15" height="14"><rect x="0" y="0" width="7" height="14" fill="#333"/><path d="M8 1 H15 M8 4 H15 M8 7 H15 M8 10 H15 M8 13 H15" stroke="#333" stroke-width="1.2"/></svg>
<svg class="a" style="left:1029px;top:174px" width="14" height="14"><rect x="0.8" y="0.8" width="12.4" height="12.4" fill="none" stroke="#333" stroke-width="1.5"/><circle cx="7" cy="7" r="4.2" fill="none" stroke="#333" stroke-width="1.5"/></svg>
<svg class="a" style="left:1055px;top:172px" width="12" height="18"><path d="M1 0 L11 10 L7 10 L9.5 16 L7.5 17 L5 11 L1 14 Z" fill="#333"/></svg>
<div class="a" style="left:908px;top:201px;width:16px;height:12px;background:#ff0000"></div>
<div class="a" style="left:929px;top:199px;width:16px;height:16px;background:#fff;border:1px solid #474747;padding:2px 0 0 2px"><svg width="11" height="10" style="display:block"><path d="M1 5 L4 8.3 L10 1.3" fill="none" stroke="#222" stroke-width="2.4"/></svg></div>
<div class="a" style="left:953px;top:199px;width:16px;height:16px;background:#fff;border:1px solid #474747;padding:2px 0 0 2px"><svg width="11" height="10" style="display:block"><path d="M1 5 L4 8.3 L10 1.3" fill="none" stroke="#222" stroke-width="2.4"/></svg></div>
<div class="a" style="left:977px;top:199px;width:16px;height:16px;background:#fff;border:1px solid #474747;padding:2px 0 0 2px"></div>
<div class="a" style="left:1001px;top:199px;width:16px;height:16px;background:#fff;border:1px solid #474747;padding:2px 0 0 2px"></div>
<div class="a" style="left:1025px;top:199px;width:16px;height:16px;background:#fff;border:1px solid #474747;padding:2px 0 0 2px"></div>
<div class="a" style="left:1049px;top:199px;width:16px;height:16px;background:#fff;border:1px solid #474747;padding:2px 0 0 2px"><svg width="11" height="10" style="display:block"><path d="M1 5 L4 8.3 L10 1.3" fill="none" stroke="#222" stroke-width="2.4"/></svg></div>
<div class="t" style="left:1076px;top:202px;">Meine Ebene</div>
<div class="a" style="left:908px;top:230px;width:16px;height:12px;background:#000"></div>
<div class="a" style="left:929px;top:229px;width:16px;height:16px;background:#fff;border:1px solid #474747;padding:2px 0 0 2px"><svg width="11" height="10" style="display:block"><path d="M1 5 L4 8.3 L10 1.3" fill="none" stroke="#222" stroke-width="2.4"/></svg></div>
<div class="a" style="left:953px;top:229px;width:16px;height:16px;background:#fff;border:1px solid #474747;padding:2px 0 0 2px"><svg width="11" height="10" style="display:block"><path d="M1 5 L4 8.3 L10 1.3" fill="none" stroke="#222" stroke-width="2.4"/></svg></div>
<div class="a" style="left:977px;top:229px;width:16px;height:16px;background:#fff;border:1px solid #474747;padding:2px 0 0 2px"><svg width="11" height="10" style="display:block"><path d="M1 5 L4 8.3 L10 1.3" fill="none" stroke="#222" stroke-width="2.4"/></svg></div>
<div class="a" style="left:1001px;top:229px;width:16px;height:16px;background:#fff;border:1px solid #474747;padding:2px 0 0 2px"></div>
<div class="a" style="left:1025px;top:229px;width:16px;height:16px;background:#fff;border:1px solid #474747;padding:2px 0 0 2px"></div>
<div class="a" style="left:1049px;top:229px;width:16px;height:16px;background:#fff;border:1px solid #474747;padding:2px 0 0 2px"></div>
<div class="t" style="left:1076px;top:231px;">Vorlage</div>
<div class="a" style="left:1058px;top:368px;width:48px;height:22px;background:linear-gradient(#f0f0f0,#e5e5e5);border:1px solid #adadad;"></div>
<svg class="a" style="left:1076px;top:373px" width="12" height="12"><path d="M6 0 V12 M0 6 H12" stroke="#222" stroke-width="2"/></svg>
<div class="a" style="left:1108px;top:368px;width:48px;height:22px;background:linear-gradient(#f0f0f0,#e5e5e5);border:1px solid #adadad;"></div>
<svg class="a" style="left:1126px;top:378px" width="12" height="3"><path d="M0 1.5 H12" stroke="#222" stroke-width="2"/></svg>
<div class="a" style="left:1158px;top:368px;width:48px;height:22px;background:linear-gradient(#f0f0f0,#e5e5e5);border:1px solid #adadad;"></div>
<svg class="a" style="left:1176px;top:372px" width="12" height="14"><path d="M0 0 H8 V2 H2 V12 H0 Z" fill="#333"/><rect x="3" y="3" width="9" height="11" fill="#333"/></svg>
<div class="a" style="left:1208px;top:368px;width:48px;height:22px;background:#f0f0f0;border:1px solid #e3e3e3"></div>
<svg class="a" style="left:1226px;top:372px" width="12" height="14"><path d="M6 0 L12 7 H8 V14 H4 V7 H0 Z" fill="#999"/></svg>
<div class="a" style="left:1258px;top:368px;width:48px;height:22px;background:linear-gradient(#f0f0f0,#e5e5e5);border:1px solid #adadad;"></div>
<svg class="a" style="left:1276px;top:372px" width="12" height="14"><path d="M6 14 L12 7 H8 V0 H4 V7 H0 Z" fill="#222"/></svg>
<!-- EIGENSCHAFTEN -->
<div class="a" style="left:1347px;top:105px;width:538px;height:867px;background:#ebebeb;border:1px solid #c8c8c8"></div>
<div class="a" style="left:1356px;top:143px;width:520px;height:820px;background:#f0f0f0;border:1px solid #8a8a8a"></div>
<div class="t" style="left:1557px;top:115px;font-size:18.5px;color:#383838">Eigenschaften</div>
<div class="a" style="left:1850px;top:111px;width:25px;height:26px;background:#b3b3b3"></div>
<svg class="a" style="left:1857px;top:119px" width="11" height="10"><path d="M1 1 L10 9 M10 1 L1 9" stroke="#fff" stroke-width="2"/></svg>
<div class="a" style="left:1854px;top:144px;width:21px;height:818px;background:#f0f0f0;border-left:1px solid #fff"></div>
<div class="a" style="left:1856px;top:288px;width:18px;height:635px;background:#cdcdcd"></div>
<svg class="a" style="left:1859px;top:150px" width="11" height="7"><path d="M1 6 L5.5 1.5 L10 6" fill="none" stroke="#555" stroke-width="1.6"/></svg>
<svg class="a" style="left:1859px;top:948px" width="11" height="7"><path d="M1 1 L5.5 5.5 L10 1" fill="none" stroke="#555" stroke-width="1.6"/></svg>
<div class="a" style="left:1357px;top:144px;width:496px;height:10px;overflow:hidden"><div class="t" style="left:8px;top:-6px">Breite:</div><div class="a" style="left:339px;top:-11px;width:131px;height:22px;background:#fff;border:1px solid #c5c5c5"></div><div class="t" style="left:342px;top:-6px">109,000 mm</div></div>
<div class="a" style="left:1811px;top:144px;width:14px;height:9px;background:#eee;border:1px solid #d0d0d0;border-top:none"></div><svg class="a" style="left:1814px;top:146px" width="9" height="5"><path d="M0 0 H9 L4.5 5 Z" fill="#000"/></svg>
<div class="t" style="left:1365px;top:164px;">Höhe:</div>
<div class="a" style="left:1696px;top:159px;width:131px;height:22px;background:#fff;border:1px solid #c5c5c5"></div>
<div class="a" style="left:1811px;top:161px;width:14px;height:9px;background:#eee;border:1px solid #d0d0d0"></div><div class="a" style="left:1811px;top:170px;width:14px;height:9px;background:#eee;border:1px solid #d0d0d0"></div><svg class="a" style="left:1814px;top:161px" width="9" height="18"><path d="M0.5 6.5 L4.5 2.5 L8.5 6.5 Z M0.5 11.5 L4.5 15.5 L8.5 11.5 Z" fill="#000"/></svg>
<div class="t" style="left:1701px;top:164px;">150,000 mm</div>
<div class="t" style="left:1365px;top:190px;">Drehung:</div>
<div class="a" style="left:1696px;top:185px;width:131px;height:22px;background:#fff;border:1px solid #c5c5c5"></div>
<div class="a" style="left:1811px;top:187px;width:14px;height:9px;background:#eee;border:1px solid #d0d0d0"></div><div class="a" style="left:1811px;top:196px;width:14px;height:9px;background:#eee;border:1px solid #d0d0d0"></div><svg class="a" style="left:1814px;top:187px" width="9" height="18"><path d="M0.5 6.5 L4.5 2.5 L8.5 6.5 Z M0.5 11.5 L4.5 15.5 L8.5 11.5 Z" fill="#000"/></svg>
<div class="t" style="left:1701px;top:190px;">0,0 °</div>
<svg class="a" style="left:1834px;top:144px" width="10" height="36"><path d="M2 1 H7 V9 H2 Z M2 15 H7 V24 H2 Z M8 28 V34 H1" fill="none" stroke="#222" stroke-width="2"/></svg>
<div class="t" style="left:1365px;top:230px;">Ursprung:</div>
<svg class="a" style="left:1698px;top:213px" width="46" height="46"><rect x="6" y="6" width="30" height="30" fill="none" stroke="#000" stroke-width="2.5"/><circle cx="6" cy="6" r="5" fill="#fff" stroke="#000" stroke-width="2.2"/><circle cx="6" cy="6" r="2.2" fill="#000"/><circle cx="36" cy="6" r="5" fill="#fff" stroke="#000" stroke-width="2.2"/><circle cx="6" cy="36" r="5" fill="#fff" stroke="#000" stroke-width="2.2"/><circle cx="36" cy="36" r="5" fill="#fff" stroke="#000" stroke-width="2.2"/><circle cx="21" cy="21" r="4.5" fill="#fff" stroke="#000" stroke-width="2.2"/></svg>
<div class="a" style="left:1357px;top:266px;width:496px;height:1px;background:#dcdcdc"></div>
<div class="a" style="left:1358px;top:281px;width:80px;height:66px;border:1px solid #dcdcdc"></div>
<div class="a" style="left:1364px;top:272px;width:70px;height:14px;background:#f0f0f0"></div>
<div class="t" style="left:1367px;top:274px;">Anordnung</div>
<div class="a" style="left:1364px;top:295px;width:20px;height:20px;background:#e8e8e8;border:1px solid #c0c0c0"></div><svg class="a" style="left:1367px;top:297px" width="14" height="16"><path d="M7 1 L13 7 H9.5 V14 H4.5 V7 H1 Z" fill="#333"/></svg>
<div class="a" style="left:1390px;top:295px;width:20px;height:20px;background:#e8e8e8;border:1px solid #c0c0c0"></div><svg class="a" style="left:1393px;top:297px" width="14" height="16"><path d="M1 1 H13" stroke="#333" stroke-width="1.6"/><path d="M7 3 L13 9 H9.5 V15 H4.5 V9 H1 Z" fill="#333"/></svg>
<div class="a" style="left:1364px;top:321px;width:20px;height:20px;background:#e8e8e8;border:1px solid #c0c0c0"></div><svg class="a" style="left:1367px;top:323px" width="14" height="16"><path d="M7 15 L13 9 H9.5 V2 H4.5 V9 H1 Z" fill="#333"/></svg>
<div class="a" style="left:1390px;top:321px;width:20px;height:20px;background:#e8e8e8;border:1px solid #c0c0c0"></div><svg class="a" style="left:1393px;top:323px" width="14" height="16"><path d="M1 15 H13" stroke="#333" stroke-width="1.6"/><path d="M7 13 L13 7 H9.5 V1 H4.5 V7 H1 Z" fill="#333"/></svg>
<div class="t" style="left:1418px;top:313px;">3</div>
<div class="a" style="left:1748px;top:282px;width:21px;height:21px;background:#ececec;border:1px solid #e0e0e0"></div>
<svg class="a" style="left:1751px;top:285px" width="16" height="16"><rect x="1" y="1" width="6" height="6" fill="#777"/><rect x="9" y="1" width="6" height="6" fill="#777"/><rect x="1" y="9" width="6" height="6" fill="#777"/><rect x="9" y="9" width="6" height="6" fill="#777"/></svg>
<div class="a" style="left:1776px;top:282px;width:21px;height:21px;background:#e8e8e8;border:1px solid #c8c8c8"></div>
<svg class="a" style="left:1779px;top:285px" width="16" height="16"><path d="M0 8 L4 4 V6.5 H12 V4 L16 8 L12 12 V9.5 H4 V12 Z" fill="#333"/></svg>
<div class="a" style="left:1804px;top:282px;width:21px;height:21px;background:#e8e8e8;border:1px solid #c8c8c8"></div>
<svg class="a" style="left:1807px;top:285px" width="16" height="16"><path d="M4 7 V4 A4 4 0 0 1 12 4 V5" fill="none" stroke="#333" stroke-width="1.6"/><rect x="2" y="7" width="12" height="8" fill="#333"/></svg>
<div class="a" style="left:1832px;top:282px;width:21px;height:21px;background:#e8e8e8;border:1px solid #c8c8c8"></div>
<svg class="a" style="left:1835px;top:285px" width="16" height="16"><path d="M4 6 V4 A4 4 0 0 1 12 4 V6" fill="none" stroke="#333" stroke-width="1.6"/><rect x="1" y="6" width="14" height="10" fill="#333"/><path d="M2 11 L5 8.5 V10 H11 V8.5 L14 11 L11 13.5 V12 H5 V13.5 Z" fill="#fff"/></svg>
<div class="a" style="left:1748px;top:318px;width:21px;height:21px;background:#ececec;border:1px solid #e0e0e0"></div>
<svg class="a" style="left:1751px;top:321px" width="16" height="16"><rect x="1.5" y="1.5" width="5" height="5" fill="none" stroke="#888"/><rect x="9.5" y="1.5" width="5" height="5" fill="none" stroke="#888"/><rect x="1.5" y="9.5" width="5" height="5" fill="none" stroke="#888"/><rect x="9.5" y="9.5" width="5" height="5" fill="none" stroke="#888"/></svg>
<div class="a" style="left:1776px;top:318px;width:21px;height:21px;background:#e8e8e8;border:1px solid #c8c8c8"></div>
<svg class="a" style="left:1779px;top:321px" width="16" height="16"><path d="M8 0 L12 4 H9.5 V12 H12 L8 16 L4 12 H6.5 V4 H4 Z" fill="#333"/></svg>
<div class="a" style="left:1804px;top:318px;width:21px;height:21px;background:#e8e8e8;border:1px solid #c8c8c8"></div>
<svg class="a" style="left:1807px;top:321px" width="16" height="16"><path d="M5 1 H11 V8 H5 Z M1 8 H4 V11 H12 V8 H15 V15 H1 Z" fill="#333"/></svg>
<div class="a" style="left:1358px;top:389px;width:495px;height:20px;background:linear-gradient(#f6f6f6,#e4e4e4);border:1px solid #b5b5b5"></div>
<svg class="a" style="left:1363px;top:394px" width="10" height="10"><path d="M1 1 L9 5 L1 9 Z" fill="#000"/></svg>
<div class="t ctr" style="left:1358px;top:393px;width:508px;color:#000">Schlagschatten</div>
<div class="a" style="left:1358px;top:411px;width:495px;height:20px;background:linear-gradient(#f6f6f6,#e4e4e4);border:1px solid #b5b5b5"></div>
<svg class="a" style="left:1363px;top:416px" width="10" height="10"><path d="M1 1 L9 5 L1 9 Z" fill="#000"/></svg>
<div class="t ctr" style="left:1358px;top:415px;width:508px;color:#000"><u>F</u>orm</div>
<div class="a" style="left:1358px;top:433px;width:495px;height:20px;background:linear-gradient(#f6f6f6,#e4e4e4);border:1px solid #dadada"></div>
<svg class="a" style="left:1363px;top:438px" width="10" height="10"><path d="M1 1 L9 5 L1 9 Z" fill="#999"/></svg>
<div class="t ctr" style="left:1358px;top:437px;width:508px;color:#8a8a8a"><u>G</u>ruppe</div>
<div class="a" style="left:1358px;top:455px;width:495px;height:20px;background:linear-gradient(#f6f6f6,#e4e4e4);border:1px solid #dadada"></div>
<svg class="a" style="left:1363px;top:460px" width="10" height="10"><path d="M1 1 L9 5 L1 9 Z" fill="#999"/></svg>
<div class="t ctr" style="left:1358px;top:459px;width:508px;color:#8a8a8a"><u>T</u>ext</div>
<div class="a" style="left:1358px;top:477px;width:495px;height:20px;background:linear-gradient(#f6f6f6,#e4e4e4);border:1px solid #dadada"></div>
<svg class="a" style="left:1363px;top:482px" width="10" height="10"><path d="M1 1 L9 5 L1 9 Z" fill="#999"/></svg>
<div class="t ctr" style="left:1358px;top:481px;width:508px;color:#8a8a8a"><u>B</u>ild</div>
<div class="a" style="left:1358px;top:499px;width:495px;height:20px;background:linear-gradient(#f6f6f6,#e4e4e4);border:1px solid #b5b5b5"></div>
<svg class="a" style="left:1363px;top:504px" width="10" height="10"><path d="M1 1 L9 5 L1 9 Z" fill="#000"/></svg>
<div class="t ctr" style="left:1358px;top:503px;width:508px;color:#000"><u>L</u>inien</div>
<div class="a" style="left:1358px;top:521px;width:495px;height:20px;background:linear-gradient(#f6f6f6,#e4e4e4);border:1px solid #b5b5b5"></div>
<svg class="a" style="left:1363px;top:526px" width="10" height="10"><path d="M0 1 H9 L4.5 9 Z" fill="#000"/></svg>
<div class="t ctr" style="left:1358px;top:525px;width:508px;color:#000">Fa<u>r</u>ben</div>
<div class="a" style="left:1362px;top:570px;width:485px;height:307px;background:#fff;border:1px solid #d9d9d9"></div>
<div class="a" style="left:1428px;top:550px;width:47px;height:20px;background:#f0f0f0;border:1px solid #d9d9d9;border-bottom:none"></div>
<div class="a" style="left:1362px;top:547px;width:67px;height:24px;background:#fff;border:1px solid #d9d9d9;border-bottom:none"></div>
<div class="t" style="left:1374px;top:553px;">Füllung</div>
<div class="t" style="left:1439px;top:554px;">Linie</div>
<div class="t" style="left:1366px;top:579px;">Füllmodus</div>
<div class="a" style="left:1606px;top:575px;width:237px;height:21px;background:linear-gradient(#f0f0f0,#e5e5e5);border:1px solid #adadad;"></div>
<div class="t" style="left:1611px;top:579px;color:#000">Durchgehend</div>
<svg class="a" style="left:1828px;top:583px" width="9" height="5"><path d="M0 0 H9 L4.5 5 Z" fill="#000"/></svg>
<div class="a" style="left:1366px;top:598px;width:477px;height:1px;background:#e3e3e3"></div>
<div class="a" style="left:1366px;top:603px;width:477px;height:245px;background:#fff;border:1px solid #828790"></div>
<div class="a" style="left:1368px;top:623px;width:473px;height:17px;background:#3399ff"></div>
<div class="t" style="left:1433px;top:608px;">Keine</div>
<div class="a" style="left:1371px;top:625px;width:15px;height:15px;background:#e84f52;border-left:1px solid #000;border-top:1px solid #000;"></div>
<div class="a" style="left:1401px;top:624px;width:6px;height:6px;background:#0099ee"></div><div class="a" style="left:1409px;top:624px;width:6px;height:6px;background:#ee22ee"></div><div class="a" style="left:1401px;top:632px;width:6px;height:6px;background:#f4f000"></div><div class="a" style="left:1409px;top:632px;width:6px;height:6px;background:#000"></div>
<div class="t" style="left:1433px;top:626px;">0-80-60-0</div>
<div class="a" style="left:1371px;top:643px;width:15px;height:15px;background:#1a1a1a;border-left:1px solid #000;border-top:1px solid #000;"></div>
<div class="a" style="left:1401px;top:642px;width:6px;height:6px;background:#0099ee"></div><div class="a" style="left:1409px;top:642px;width:6px;height:6px;background:#ee22ee"></div><div class="a" style="left:1401px;top:650px;width:6px;height:6px;background:#f4f000"></div><div class="a" style="left:1409px;top:650px;width:6px;height:6px;background:#000"></div>
<div class="t" style="left:1433px;top:644px;">Black</div>
<div class="a" style="left:1371px;top:661px;width:15px;height:15px;background:#000;border-left:1px solid #000;border-top:1px solid #000;"></div>
<div class="a" style="left:1401px;top:660px;width:6px;height:6px;background:#0099ee"></div><div class="a" style="left:1409px;top:660px;width:6px;height:6px;background:#ee22ee"></div><div class="a" style="left:1401px;top:668px;width:6px;height:6px;background:#f4f000"></div><div class="a" style="left:1409px;top:668px;width:6px;height:6px;background:#000"></div>
<svg class="a" style="left:1418px;top:661px" width="12" height="12"><circle cx="6" cy="6" r="3" fill="none" stroke="#333"/><path d="M6 0 V12 M0 6 H12" stroke="#333"/></svg>
<div class="t" style="left:1433px;top:662px;">Registration</div>
<div class="a" style="left:1371px;top:679px;width:15px;height:15px;background:#fff;border-left:1px solid #000;border-top:1px solid #000;"></div>
<div class="a" style="left:1401px;top:678px;width:6px;height:6px;background:#0099ee"></div><div class="a" style="left:1409px;top:678px;width:6px;height:6px;background:#ee22ee"></div><div class="a" style="left:1401px;top:686px;width:6px;height:6px;background:#f4f000"></div><div class="a" style="left:1409px;top:686px;width:6px;height:6px;background:#000"></div>
<div class="t" style="left:1433px;top:680px;">White</div>
<div class="a" style="left:1371px;top:697px;width:15px;height:15px;background:#ef7f0a;border-left:1px solid #000;border-top:1px solid #000;"></div>
<div class="a" style="left:1401px;top:696px;width:6px;height:6px;background:#0099ee"></div><div class="a" style="left:1409px;top:696px;width:6px;height:6px;background:#ee22ee"></div><div class="a" style="left:1401px;top:704px;width:6px;height:6px;background:#f4f000"></div><div class="a" style="left:1409px;top:704px;width:6px;height:6px;background:#000"></div>
<div class="a" style="left:1419px;top:697px;width:10px;height:10px;border-radius:50%;background:radial-gradient(circle at 40% 35%,#e04040,#a00000)"></div>
<div class="t" style="left:1433px;top:698px;">bleed area</div>
<div class="a" style="left:1371px;top:715px;width:15px;height:15px;background:#303030;border-left:1px solid #000;border-top:1px solid #000;"></div>
<div class="a" style="left:1401px;top:714px;width:6px;height:6px;background:#0099ee"></div><div class="a" style="left:1409px;top:714px;width:6px;height:6px;background:#ee22ee"></div><div class="a" style="left:1401px;top:722px;width:6px;height:6px;background:#f4f000"></div><div class="a" style="left:1409px;top:722px;width:6px;height:6px;background:#000"></div>
<div class="a" style="left:1419px;top:715px;width:10px;height:10px;border-radius:50%;background:radial-gradient(circle at 40% 35%,#e04040,#a00000)"></div>
<div class="t" style="left:1433px;top:716px;">infos</div>
<div class="a" style="left:1371px;top:733px;width:15px;height:15px;background:#a2a4a0;border-left:1px solid #000;border-top:1px solid #000;"></div>
<div class="a" style="left:1401px;top:732px;width:6px;height:6px;background:#0099ee"></div><div class="a" style="left:1409px;top:732px;width:6px;height:6px;background:#ee22ee"></div><div class="a" style="left:1401px;top:740px;width:6px;height:6px;background:#f4f000"></div><div class="a" style="left:1409px;top:740px;width:6px;height:6px;background:#000"></div>
<div class="a" style="left:1419px;top:733px;width:10px;height:10px;border-radius:50%;background:radial-gradient(circle at 40% 35%,#e04040,#a00000)"></div>
<div class="t" style="left:1433px;top:734px;">safety distance</div>
<div class="t" style="left:1366px;top:855px;">Tonwert:</div>
<div class="a" style="left:1606px;top:851px;width:237px;height:21px;background:#fff;border:1px solid #c5c5c5"></div>
<div class="a" style="left:1827px;top:853px;width:14px;height:8px;background:#eee;border:1px solid #d0d0d0"></div><div class="a" style="left:1827px;top:861px;width:14px;height:8px;background:#eee;border:1px solid #d0d0d0"></div><svg class="a" style="left:1830px;top:853px" width="9" height="17"><path d="M0.5 6.0 L4.5 2.0 L8.5 6.0 Z M0.5 10.0 L4.5 14.0 L8.5 10.0 Z" fill="#000"/></svg>
<div class="t" style="left:1611px;top:855px;">100%</div>
<div class="t" style="left:1362px;top:889px;">Überdrucken</div>
<div class="a" style="left:1609px;top:885px;width:240px;height:21px;background:linear-gradient(#f0f0f0,#e5e5e5);border:1px solid #adadad;"></div>
<div class="t" style="left:1614px;top:889px;color:#000">Knockout</div>
<svg class="a" style="left:1834px;top:893px" width="9" height="5"><path d="M0 0 H9 L4.5 5 Z" fill="#000"/></svg>
<div class="t" style="left:1638px;top:916px;letter-spacing:0.18px">Nur verwendete Farben anzeigen</div>
<div class="a" style="left:1833px;top:914px;width:16px;height:16px;background:#fff;border:1px solid #333"></div>
<div class="a" style="left:1358px;top:942px;width:495px;height:20px;background:linear-gradient(#f6f6f6,#e4e4e4);border:1px solid #b5b5b5"></div>
<svg class="a" style="left:1363px;top:947px" width="10" height="10"><path d="M1 1 L9 5 L1 9 Z" fill="#000"/></svg>
<div class="t ctr" style="left:1358px;top:946px;width:508px"><u>T</u>ransparenz</div>
<svg class="a" style="left:1354px;top:516px" width="504" height="57"><path d="M3.5 2.5 H500 V27 H124 V53 H3.5 Z" fill="none" stroke="#f20000" stroke-width="5" stroke-linejoin="round"/></svg>
<!-- FARBEN UND FUELLUNGEN DIALOG -->
<div class="a" style="left:893px;top:421px;width:430px;height:460px;background:#ebebeb;border:1px solid #c4c4c4"></div>
<div class="a" style="left:902px;top:458px;width:413px;height:414px;background:#f0f0f0;border:1px solid #dcdcdc"></div>
<div class="a" style="left:904px;top:431px;width:19px;height:19px;border-radius:50%;background:radial-gradient(circle at 35% 35%,#9fd0f0,#3a8ac4 55%,#1d5a8a)"></div>
<svg class="a" style="left:904px;top:430px" width="21" height="21" viewBox="0 0 20 20"><path d="M18 2 L8 16 L6.5 17 L7 15.5 L17 1.5 Z" fill="#e8c070" stroke="#7a5020" stroke-width="0.8"/><path d="M4 4 Q2 12 8 16" fill="none" stroke="#e8f4ff" stroke-width="1.5" opacity="0.8"/></svg>

<div class="t" style="left:938px;top:431px;font-size:19px;color:#383838">Farben und Füllungen verwalten</div>
<div class="t" style="left:1233px;top:424px;font-size:20px;font-weight:bold;color:#222">?</div>
<div class="a" style="left:1257px;top:422px;width:58px;height:26px;background:#c6c6c6"></div>
<svg class="a" style="left:1279px;top:429px" width="14" height="12"><path d="M1.5 1 L12.5 11 M12.5 1 L1.5 11" stroke="#fff" stroke-width="2.2"/></svg>
<!-- tree -->
<div class="a" style="left:907px;top:464px;width:236px;height:402px;background:#fff;border:1px solid #828790"></div>
<div class="a" style="left:928px;top:467px;width:214px;height:16px;background:linear-gradient(#fff,#f2f2f2);border-bottom:1px solid #e8e8e8"></div>
<svg class="a" style="left:915px;top:469px" width="9" height="9"><path d="M8 1 L8 8 L1 8 Z" fill="#444"/></svg>
<div class="t" style="left:931px;top:468px">Füllfarben</div>
<div class="a" style="left:951px;top:485px;width:15px;height:15px;border-left:1px solid #000;border-top:1px solid #000;background:#e84f52;"></div>
<div class="a" style="left:981px;top:485px;width:6px;height:6px;background:#0099ee"></div><div class="a" style="left:989px;top:485px;width:6px;height:6px;background:#ee22ee"></div><div class="a" style="left:981px;top:493px;width:6px;height:6px;background:#f4f000"></div><div class="a" style="left:989px;top:493px;width:6px;height:6px;background:#000"></div>
<div class="t" style="left:1017px;top:486px">0-80-60-0</div>
<div class="a" style="left:951px;top:503px;width:15px;height:15px;border-left:1px solid #000;border-top:1px solid #000;background:#1a1a1a;"></div>
<div class="a" style="left:981px;top:503px;width:6px;height:6px;background:#0099ee"></div><div class="a" style="left:989px;top:503px;width:6px;height:6px;background:#ee22ee"></div><div class="a" style="left:981px;top:511px;width:6px;height:6px;background:#f4f000"></div><div class="a" style="left:989px;top:511px;width:6px;height:6px;background:#000"></div>
<div class="t" style="left:1017px;top:504px">Black</div>
<div class="a" style="left:951px;top:521px;width:15px;height:15px;border-left:1px solid #000;border-top:1px solid #000;background:#000;"></div>
<div class="a" style="left:981px;top:521px;width:6px;height:6px;background:#0099ee"></div><div class="a" style="left:989px;top:521px;width:6px;height:6px;background:#ee22ee"></div><div class="a" style="left:981px;top:529px;width:6px;height:6px;background:#f4f000"></div><div class="a" style="left:989px;top:529px;width:6px;height:6px;background:#000"></div>
<svg class="a" style="left:998px;top:523px" width="12" height="12"><circle cx="6" cy="6" r="3" fill="none" stroke="#333"/><path d="M6 0 V12 M0 6 H12" stroke="#333"/></svg>
<div class="t" style="left:1017px;top:522px">Registration</div>
<div class="a" style="left:951px;top:539px;width:15px;height:15px;background:#fff;border-left:1px solid #000;border-top:1px solid #000;"></div>
<div class="a" style="left:981px;top:539px;width:6px;height:6px;background:#0099ee"></div><div class="a" style="left:989px;top:539px;width:6px;height:6px;background:#ee22ee"></div><div class="a" style="left:981px;top:547px;width:6px;height:6px;background:#f4f000"></div><div class="a" style="left:989px;top:547px;width:6px;height:6px;background:#000"></div>
<div class="t" style="left:1017px;top:540px">White</div>
<div class="a" style="left:951px;top:557px;width:15px;height:15px;border-left:1px solid #000;border-top:1px solid #000;background:#ef7f0a;"></div>
<div class="a" style="left:981px;top:557px;width:6px;height:6px;background:#0099ee"></div><div class="a" style="left:989px;top:557px;width:6px;height:6px;background:#ee22ee"></div><div class="a" style="left:981px;top:565px;width:6px;height:6px;background:#f4f000"></div><div class="a" style="left:989px;top:565px;width:6px;height:6px;background:#000"></div>
<div class="a" style="left:1000px;top:560px;width:10px;height:10px;border-radius:50%;background:radial-gradient(circle at 40% 35%,#e04040,#a00000)"></div>
<div class="t" style="left:1017px;top:558px">bleed area</div>
<div class="a" style="left:951px;top:575px;width:15px;height:15px;border-left:1px solid #000;border-top:1px solid #000;background:#303030;"></div>
<div class="a" style="left:981px;top:575px;width:6px;height:6px;background:#0099ee"></div><div class="a" style="left:989px;top:575px;width:6px;height:6px;background:#ee22ee"></div><div class="a" style="left:981px;top:583px;width:6px;height:6px;background:#f4f000"></div><div class="a" style="left:989px;top:583px;width:6px;height:6px;background:#000"></div>
<div class="a" style="left:1000px;top:578px;width:10px;height:10px;border-radius:50%;background:radial-gradient(circle at 40% 35%,#e04040,#a00000)"></div>
<div class="t" style="left:1017px;top:576px">infos</div>
<div class="a" style="left:951px;top:593px;width:15px;height:15px;border-left:1px solid #000;border-top:1px solid #000;background:#a2a4a0;"></div>
<div class="a" style="left:981px;top:593px;width:6px;height:6px;background:#0099ee"></div><div class="a" style="left:989px;top:593px;width:6px;height:6px;background:#ee22ee"></div><div class="a" style="left:981px;top:601px;width:6px;height:6px;background:#f4f000"></div><div class="a" style="left:989px;top:601px;width:6px;height:6px;background:#000"></div>
<div class="a" style="left:1000px;top:596px;width:10px;height:10px;border-radius:50%;background:radial-gradient(circle at 40% 35%,#e04040,#a00000)"></div>
<div class="t" style="left:1017px;top:594px">safety distance</div>

<svg class="a" style="left:915px;top:613px" width="9" height="9"><path d="M8 1 L8 8 L1 8 Z" fill="#444"/></svg>
<div class="t" style="left:931px;top:612px">Farbverläufe</div>
<div class="a" style="left:951px;top:630px;width:48px;height:11px;background:linear-gradient(90deg,#fff,#222 85%)"></div>
<div class="t" style="left:1005px;top:630px">u7e</div>
<div class="t" style="left:931px;top:648px">Füllmuster</div>
<div class="a" style="left:1149px;top:465px;width:159px;height:22px;background:linear-gradient(#f0f0f0,#e5e5e5);border:1px solid #adadad"></div><div class="t ctr" style="left:1149px;top:470px;width:159px;color:#000">Importieren</div>
<div class="a" style="left:1149px;top:494px;width:159px;height:22px;background:linear-gradient(#f0f0f0,#e5e5e5);border:1px solid #adadad"></div><div class="t ctr" style="left:1149px;top:499px;width:159px;color:#000">Hinzufügen</div>
<div class="a" style="left:1149px;top:523px;width:159px;height:22px;background:#f3f3f3;border:1px solid #dcdcdc"></div><div class="t ctr" style="left:1149px;top:528px;width:159px;color:#9a9a9a">Bearbeiten</div>
<div class="a" style="left:1149px;top:552px;width:159px;height:22px;background:#f3f3f3;border:1px solid #dcdcdc"></div><div class="t ctr" style="left:1149px;top:557px;width:159px;color:#9a9a9a">Duplizieren</div>
<div class="a" style="left:1149px;top:581px;width:159px;height:22px;background:linear-gradient(#f0f0f0,#e5e5e5);border:1px solid #adadad"></div><div class="t ctr" style="left:1149px;top:586px;width:159px;color:#000">Löschen</div>
<div class="a" style="left:1149px;top:610px;width:159px;height:22px;background:linear-gradient(#f0f0f0,#e5e5e5);border:1px solid #adadad"></div><div class="t ctr" style="left:1149px;top:615px;width:159px;color:#000">Unbenutzte entfernen</div>

<div class="a" style="left:1146px;top:648px;width:164px;height:92px;border:1px solid #dcdcdc"></div>
<div class="a" style="left:1154px;top:640px;width:76px;height:14px;background:#f0f0f0"></div>
<div class="t" style="left:1157px;top:640px">Farbpaletten</div>
<div class="t" style="left:1154px;top:662px">Paletten zusammenführen</div>
<div class="a" style="left:1157px;top:682px;width:147px;height:21px;background:linear-gradient(#f0f0f0,#e5e5e5);border:1px solid #adadad"></div>
<div class="a" style="left:1287px;top:684px;width:1px;height:17px;background:#adadad"></div>
<svg class="a" style="left:1290px;top:689px" width="9" height="6"><path d="M0 0 H9 L4.5 5 Z" fill="#000"/></svg>
<div class="t ctr" style="left:1157px;top:686px;width:132px">Scribus Basic</div>
<div class="a" style="left:1157px;top:710px;width:145px;height:21px;background:linear-gradient(#f0f0f0,#e5e5e5);border:1px solid #adadad"></div>
<div class="t ctr" style="left:1157px;top:714px;width:145px">Farbpalette speichern</div>
<div class="a" style="left:1149px;top:815px;width:159px;height:22px;background:linear-gradient(#f0f0f0,#e5e5e5);border:1px solid #adadad"></div>
<div class="t ctr" style="left:1149px;top:820px;width:159px">OK</div>
<div class="a" style="left:1149px;top:844px;width:159px;height:22px;background:linear-gradient(#f0f0f0,#e5e5e5);border:1px solid #adadad"></div>
<div class="t ctr" style="left:1149px;top:849px;width:159px">Abbrechen</div>
<!-- red highlight boxes -->
<div class="a" style="left:1142px;top:458px;width:177px;height:63px;border:5px solid #f20000;border-radius:2px"></div>
<div class="a" style="left:1140px;top:606px;width:174px;height:32px;border:5px solid #f20000;border-radius:2px"></div>
<div class="a" style="left:1145px;top:675px;width:167px;height:35px;border:5px solid #f20000;border-radius:2px"></div>

<!-- FARBE BEARBEITEN -->
<div class="a" style="left:261px;top:629px;width:605px;height:350px;background:#cb9a7c;border:1px solid #a8785c"></div>
<div class="a" style="left:270px;top:666px;width:587px;height:304px;background:#f0f0f0;border:1px solid #b58a70"></div>
<div class="a" style="left:272px;top:638px;width:19px;height:19px;border-radius:50%;background:radial-gradient(circle at 35% 35%,#9fd0f0,#3a8ac4 55%,#1d5a8a)"></div>
<svg class="a" style="left:272px;top:637px" width="21" height="21" viewBox="0 0 20 20"><path d="M18 2 L8 16 L6.5 17 L7 15.5 L17 1.5 Z" fill="#e8c070" stroke="#7a5020" stroke-width="0.8"/><path d="M4 4 Q2 12 8 16" fill="none" stroke="#e8f4ff" stroke-width="1.5" opacity="0.8"/></svg>
<div class="t" style="left:491px;top:639px;font-size:19px;color:#3d2d25">Farbe bearbeiten</div>
<div class="t" style="left:775px;top:632px;font-size:20px;font-weight:bold;color:#222">?</div>
<div class="a" style="left:799px;top:629px;width:58px;height:27px;background:linear-gradient(#c84a4e 75%,#d08070)"></div>
<svg class="a" style="left:821px;top:636px" width="14" height="12"><path d="M1.5 1 L12.5 11 M12.5 1 L1.5 11" stroke="#fff" stroke-width="2.2"/></svg>
<div class="t" style="left:280px;top:682px;">Name:</div>
<div class="a" style="left:280px;top:704px;width:207px;height:22px;background:#fff;border:1px solid #b8b8b8"></div>
<div class="t" style="left:284px;top:709px;">Neue Farbe</div>
<div class="t" style="left:280px;top:736px;">Farbmodell</div>
<div class="a" style="left:314px;top:850px;width:49px;height:60px;background:#fff;border-left:1px solid #555;border-top:1px solid #555"></div>
<div class="a" style="left:403px;top:850px;width:49px;height:60px;background:#fff;border-left:1px solid #555;border-top:1px solid #555"></div>
<div class="a" style="left:291px;top:927px;width:82px;height:22px;background:linear-gradient(#eef4fa,#dfe7ef);border:1px solid #3c7fb1"></div>
<div class="t ctr" style="left:291px;top:932px;width:82px">OK</div>
<div class="a" style="left:395px;top:927px;width:81px;height:22px;background:linear-gradient(#f0f0f0,#e5e5e5);border:1px solid #adadad;"></div>
<div class="t ctr" style="left:395px;top:932px;width:81px">Abbrechen</div>
<div class="a" style="left:280px;top:758px;width:207px;height:22px;background:linear-gradient(#eaf4fc,#d0e6f6);border:1px solid #569de5"></div>
<div class="t" style="left:284px;top:763px;">CMYK</div>
<svg class="a" style="left:472px;top:766px" width="9" height="5"><path d="M0 0 H9 L4.5 5 Z" fill="#000"/></svg>
<div class="a" style="left:282px;top:781px;width:208px;height:82px;background:rgba(0,0,0,0.18);filter:blur(2px)"></div>
<div class="a" style="left:280px;top:779px;width:207px;height:82px;background:#fff;border:1px solid #767676"></div>
<div class="a" style="left:281px;top:780px;width:205px;height:16px;background:#3399ff"></div>
<div class="t" style="left:284px;top:782px;color:#fff">CMYK</div>
<div class="t" style="left:284px;top:798px;color:#000">RGB</div>
<div class="t" style="left:284px;top:814px;color:#000">Webfarben</div>
<div class="t" style="left:284px;top:830px;color:#000">L*a*b*</div>
<div class="t" style="left:284px;top:846px;color:#000">HLC</div>
<div class="a" style="left:495px;top:678px;width:351px;height:20px;background:linear-gradient(#f0f0f0,#e5e5e5);border:1px solid #adadad;"></div>
<div class="t ctr" style="left:495px;top:682px;width:335px">HSV-Farbwähler</div>
<div class="a" style="left:830px;top:680px;width:1px;height:16px;background:#adadad"></div>
<svg class="a" style="left:834px;top:686px" width="9" height="5"><path d="M0 0 H9 L4.5 5 Z" fill="#000"/></svg>
<div class="a" style="left:579px;top:713px;width:181px;height:129px;background:linear-gradient(rgba(255,255,255,0),#fff),linear-gradient(90deg,#ff0000,#ffff00 17%,#00ff00 33%,#00ffff 50%,#0000ff 67%,#ff00ff 83%,#ff0000);border-left:1px solid #555;border-top:1px solid #555"></div>
<div class="t" style="left:492px;top:863px;">C:</div>
<div class="a" style="left:512px;top:858px;width:10px;height:20px;background:#e6e6e6;border:1px solid #c4c4c4;border-radius:1px"></div>
<div class="a" style="left:522px;top:857px;width:245px;height:22px;background:linear-gradient(90deg,#eef8fd,#00a2e0)"></div>
<div class="a" style="left:772px;top:857px;width:73px;height:22px;background:#fff;border:1px solid #c5c5c5"></div>
<div class="a" style="left:829px;top:859px;width:14px;height:9px;background:#eee;border:1px solid #d0d0d0"></div><div class="a" style="left:829px;top:868px;width:14px;height:9px;background:#eee;border:1px solid #d0d0d0"></div><svg class="a" style="left:832px;top:859px" width="9" height="18"><path d="M0.5 6.5 L4.5 2.5 L8.5 6.5 Z M0.5 11.5 L4.5 15.5 L8.5 11.5 Z" fill="#000"/></svg>
<div class="t" style="left:777px;top:862px;">0,0 %</div>
<div class="t" style="left:492px;top:890px;">M:</div>
<div class="a" style="left:512px;top:885px;width:10px;height:20px;background:#e6e6e6;border:1px solid #c4c4c4;border-radius:1px"></div>
<div class="a" style="left:522px;top:884px;width:245px;height:22px;background:linear-gradient(90deg,#fdeef5,#e2007a)"></div>
<div class="a" style="left:772px;top:884px;width:73px;height:22px;background:#fff;border:1px solid #c5c5c5"></div>
<div class="a" style="left:829px;top:886px;width:14px;height:9px;background:#eee;border:1px solid #d0d0d0"></div><div class="a" style="left:829px;top:895px;width:14px;height:9px;background:#eee;border:1px solid #d0d0d0"></div><svg class="a" style="left:832px;top:886px" width="9" height="18"><path d="M0.5 6.5 L4.5 2.5 L8.5 6.5 Z M0.5 11.5 L4.5 15.5 L8.5 11.5 Z" fill="#000"/></svg>
<div class="t" style="left:777px;top:889px;">0,0 %</div>
<div class="t" style="left:492px;top:917px;">Y:</div>
<div class="a" style="left:512px;top:912px;width:10px;height:20px;background:#e6e6e6;border:1px solid #c4c4c4;border-radius:1px"></div>
<div class="a" style="left:522px;top:911px;width:245px;height:22px;background:linear-gradient(90deg,#fffbe6,#ffed00)"></div>
<div class="a" style="left:772px;top:911px;width:73px;height:22px;background:#fff;border:1px solid #c5c5c5"></div>
<div class="a" style="left:829px;top:913px;width:14px;height:9px;background:#eee;border:1px solid #d0d0d0"></div><div class="a" style="left:829px;top:922px;width:14px;height:9px;background:#eee;border:1px solid #d0d0d0"></div><svg class="a" style="left:832px;top:913px" width="9" height="18"><path d="M0.5 6.5 L4.5 2.5 L8.5 6.5 Z M0.5 11.5 L4.5 15.5 L8.5 11.5 Z" fill="#000"/></svg>
<div class="t" style="left:777px;top:916px;">0,0 %</div>
<div class="t" style="left:492px;top:944px;">K:</div>
<div class="a" style="left:512px;top:939px;width:10px;height:20px;background:#e6e6e6;border:1px solid #c4c4c4;border-radius:1px"></div>
<div class="a" style="left:522px;top:938px;width:245px;height:22px;background:linear-gradient(90deg,#f0f0f0,#1b1b1b)"></div>
<div class="a" style="left:772px;top:938px;width:73px;height:22px;background:#fff;border:1px solid #c5c5c5"></div>
<div class="a" style="left:829px;top:940px;width:14px;height:9px;background:#eee;border:1px solid #d0d0d0"></div><div class="a" style="left:829px;top:949px;width:14px;height:9px;background:#eee;border:1px solid #d0d0d0"></div><svg class="a" style="left:832px;top:940px" width="9" height="18"><path d="M0.5 6.5 L4.5 2.5 L8.5 6.5 Z M0.5 11.5 L4.5 15.5 L8.5 11.5 Z" fill="#000"/></svg>
<div class="t" style="left:777px;top:943px;">0,0 %</div>
<div class="a" style="left:271px;top:667px;width:224px;height:202px;border:5px solid #f20000"></div>
</body></html>
